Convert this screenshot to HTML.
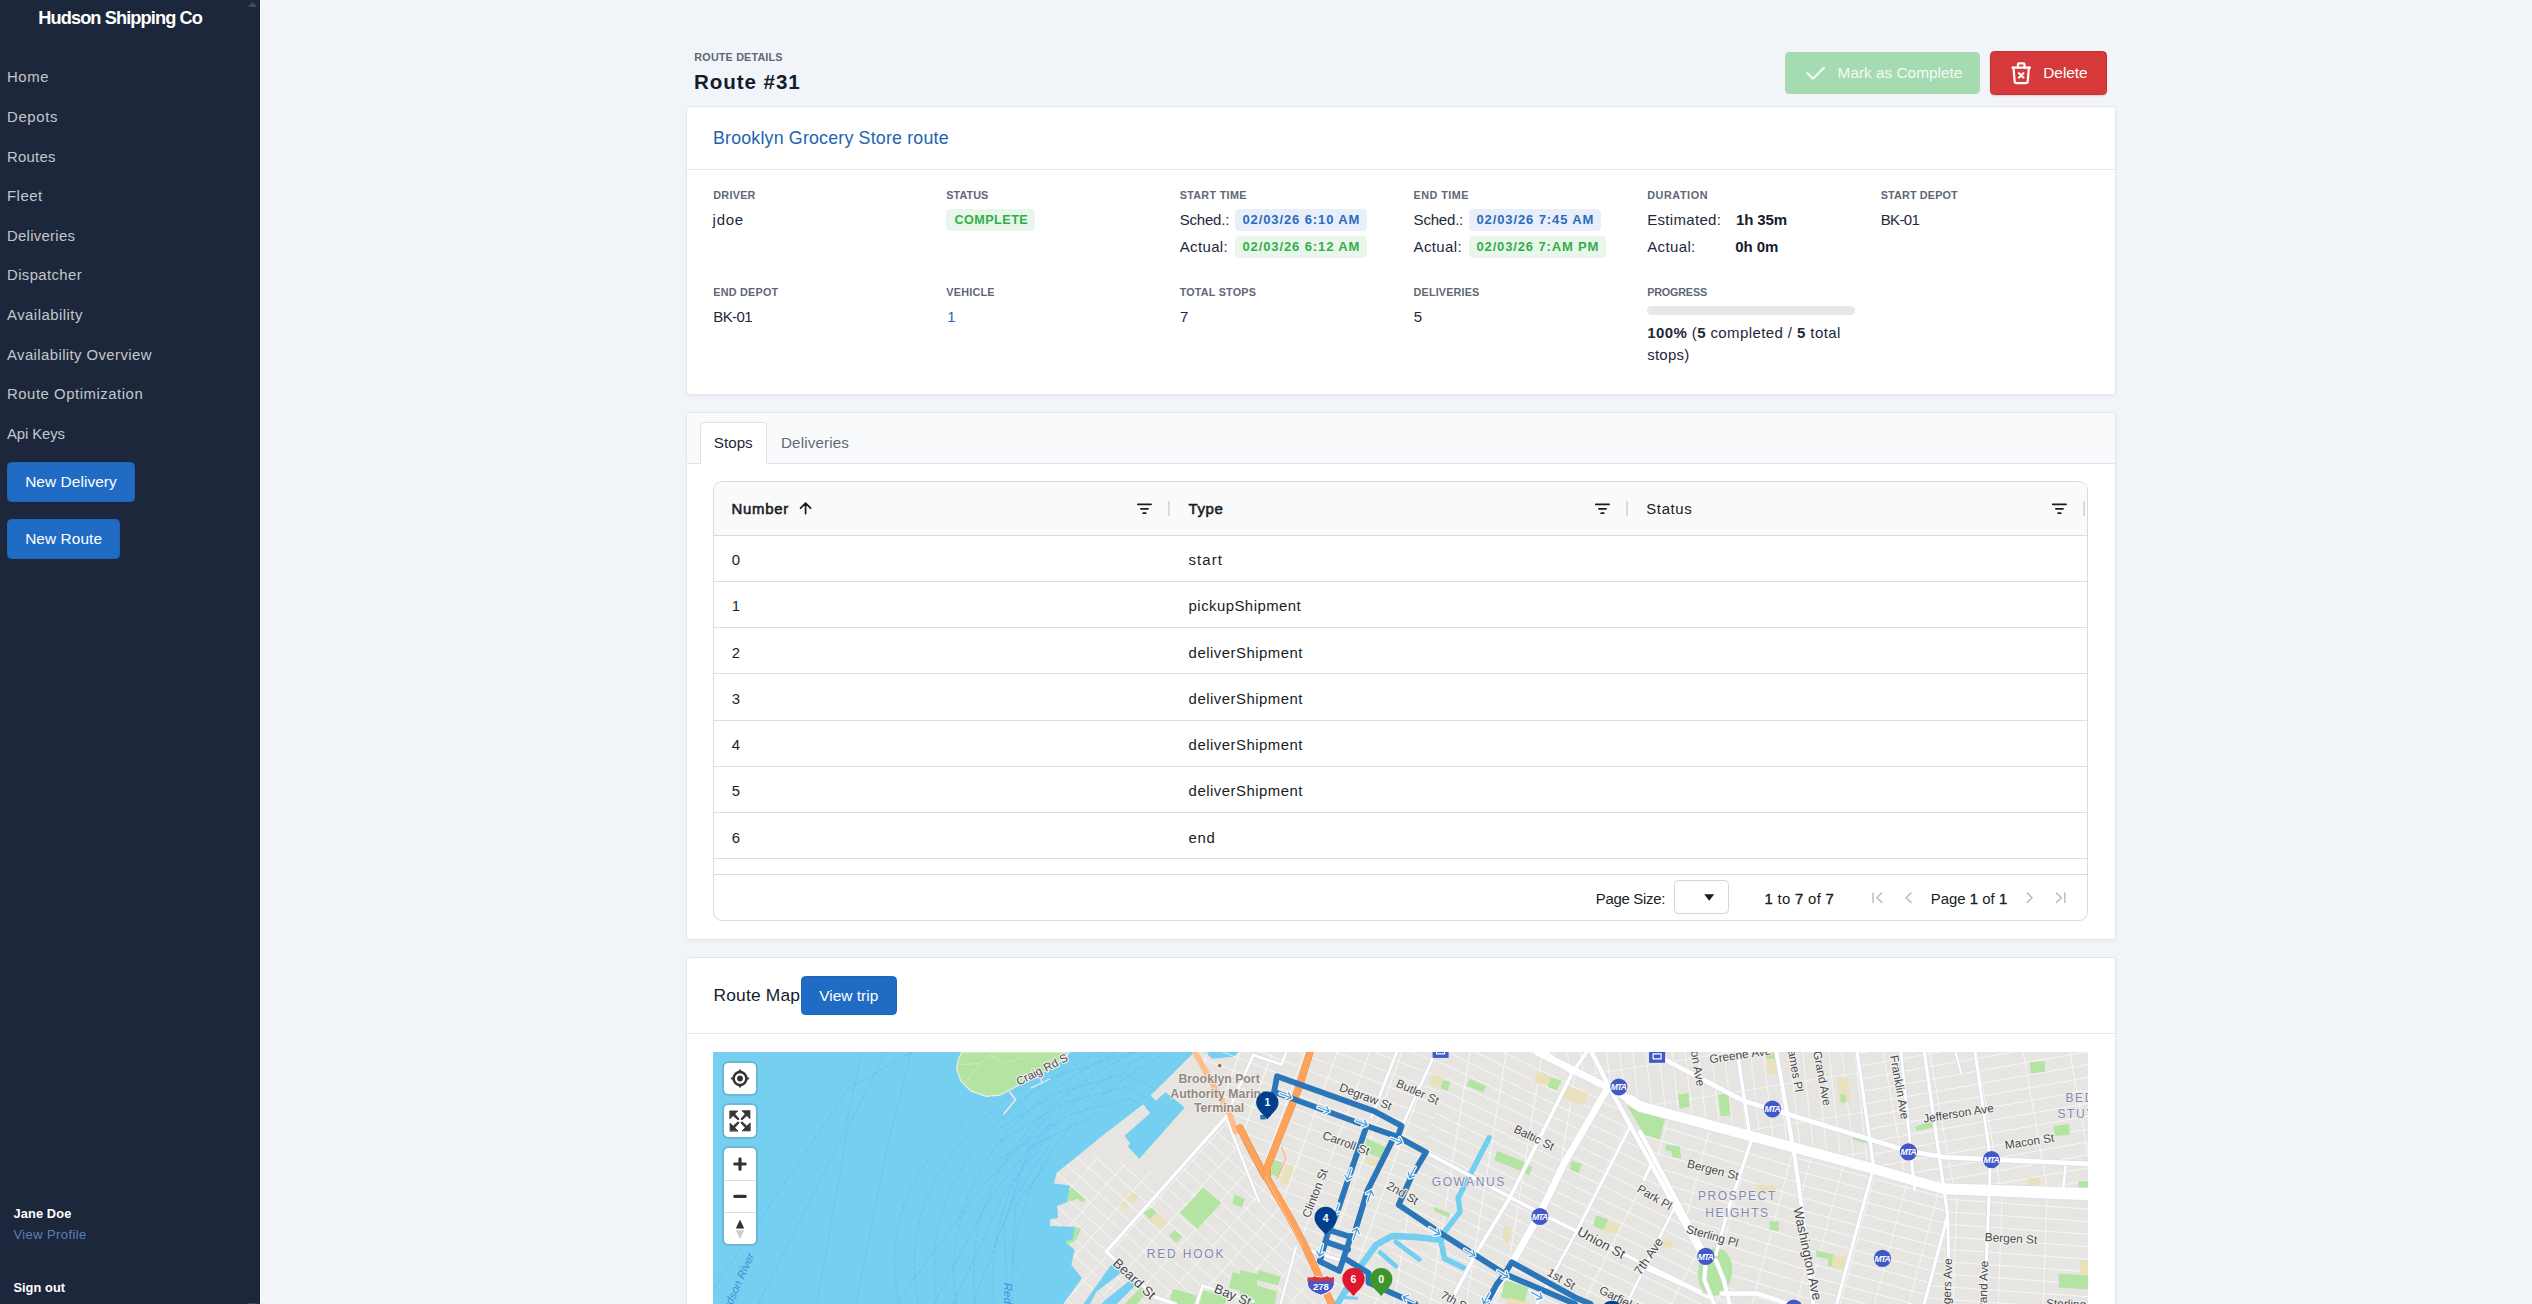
<!DOCTYPE html>
<html lang="en"><head><meta charset="utf-8"><title>Route #31 - Hudson Shipping Co</title>
<style>
*{box-sizing:border-box}
html,body{margin:0;padding:0}
body{width:2532px;height:1304px;overflow:hidden;position:relative;background:#f1f5f9;font-family:"Liberation Sans",sans-serif;color:#1e293b}
.a{position:absolute}
.t{position:absolute;white-space:pre;line-height:1;font-family:"Liberation Sans",sans-serif;color:#1e293b}
.t b{font-weight:700}.t i{font-style:normal;-webkit-text-stroke:0.38px currentColor}
#side{left:0;top:0;width:260px;height:1304px;background:#1d273b}
.btn{position:absolute;border-radius:4.4px;background:#206bc4;border:1px solid #1f64b6;box-shadow:0 1px 0 rgba(30,41,59,.05)}
.card{position:absolute;background:#fff;border:1px solid #e3e6ea;border-radius:3.5px;box-shadow:0 2px 4px rgba(30,41,59,.04)}
.hl{position:absolute;height:1.1px;background:#e3e6ea}
.bdg{position:absolute;height:22px;border-radius:4.4px}
.rl{position:absolute;left:714px;width:1373px;height:1.1px;background:#dddfe0}
.sep{position:absolute;width:1.6px;top:501px;height:15px;background:#d9dadb}
.ctrl{position:absolute;left:724px;width:32px;background:#fff;border-radius:4.4px;box-shadow:0 0 0 2px rgba(0,0,0,.1)}
</style></head><body>
<!-- sidebar -->
<div id="side" class="a"></div>
<div class="a" style="left:259px;top:0;width:1px;height:1304px;background:#182136"></div><div class="a" style="left:260px;top:0;width:1px;height:1304px;background:#fdfefe"></div><div class="a" style="left:248px;top:1303px;width:9px;height:1px;background:#3a465b"></div>
<svg class="a" style="left:247px;top:1px" width="11" height="7"><path d="M0.8 6L5.5 0.9L10.2 6Z" fill="#414c60"/></svg>
<div class="btn" style="left:7px;top:462px;width:128px;height:40px"></div>
<div class="btn" style="left:7px;top:519px;width:113px;height:40px"></div>

<!-- page header buttons -->
<div class="a" style="left:1785px;top:52px;width:195px;height:42px;border-radius:4.4px;background:#a4dbb1"></div>
<svg class="a" style="left:1802px;top:60.2px" width="26.4" height="26.4" viewBox="0 0 24 24" fill="none" stroke="#f3faf5" stroke-width="2" stroke-linecap="round" stroke-linejoin="round"><path d="M5 12l5 5l10 -10"/></svg>
<div class="a" style="left:1990px;top:51px;width:117px;height:44px;border-radius:4.4px;background:#d63939;border:1px solid #bf3338;box-shadow:0 1px 2px rgba(214,57,57,.25)"></div>
<svg class="a" style="left:2007.95px;top:59.95px" width="26.4" height="26.4" viewBox="0 0 24 24" fill="none" stroke="#fff" stroke-width="2" stroke-linecap="round" stroke-linejoin="round"><path d="M4 7h16"/><path d="M5 7l1 12a2 2 0 0 0 2 2h8a2 2 0 0 0 2 -2l1 -12"/><path d="M9 7v-3a1 1 0 0 1 1 -1h4a1 1 0 0 1 1 1v3"/><path d="M10 12l4 4m0 -4l-4 4"/></svg>

<!-- card 1 -->
<div class="card" style="left:686px;top:106px;width:1430px;height:289px"></div>
<div class="hl" style="left:687px;top:169px;width:1428px"></div>
<div class="bdg" style="left:946px;top:209px;width:89px;background:#e9f6eb"></div>
<div class="bdg" style="left:1235px;top:209px;width:132px;background:#e8eff9"></div>
<div class="bdg" style="left:1235px;top:236px;width:132px;background:#e9f6eb"></div>
<div class="bdg" style="left:1469px;top:209px;width:132px;background:#e8eff9"></div>
<div class="bdg" style="left:1469px;top:236px;width:136.6px;background:#e9f6eb"></div>
<div class="a" style="left:1647px;top:306px;width:208px;height:9px;border-radius:4.5px;background:#e6e7e9"></div>

<!-- card 2 (tabs + grid) -->
<div class="card" style="left:686px;top:412px;width:1430px;height:528px"></div>
<div class="a" style="left:687px;top:413px;width:1428px;height:50.5px;background:#f8fafc;border-bottom:1.1px solid #dfe3e8;border-radius:3.4px 3.4px 0 0"></div>
<div class="a" style="left:700px;top:422px;width:67px;height:41.5px;background:#fff;border:1px solid #dfe3e8;border-bottom:none;border-radius:4.4px 4.4px 0 0"></div><div class="a" style="left:701px;top:462px;width:65px;height:2.6px;background:#fff"></div>
<div class="a" style="left:713px;top:481px;width:1375px;height:440px;border:1.1px solid #d9dadb;border-radius:8.8px;background:#fff;overflow:hidden"><div class="a" style="left:0;top:0;width:1375px;height:53px;background:#fafafb"></div></div>
<div class="rl" style="top:534.8px;background:#d9dbdc"></div>
<div class="rl" style="top:580.7px"></div><div class="rl" style="top:627px"></div><div class="rl" style="top:673.3px"></div><div class="rl" style="top:719.6px"></div><div class="rl" style="top:765.9px"></div><div class="rl" style="top:812.2px"></div><div class="rl" style="top:858.1px"></div>
<div class="rl" style="top:874.2px;background:#d9dbdc"></div>
<div class="sep" style="left:1168.3px"></div><div class="sep" style="left:1626.2px"></div>
<div class="a" style="left:2082.6px;top:501px;width:2.8px;height:15px;background:#d9dadb"></div>
<!-- sort arrow + filter icons -->
<svg class="a" style="left:798px;top:500px" width="16" height="16" fill="none" stroke="#181d1f" stroke-width="1.7" stroke-linecap="round" stroke-linejoin="round"><path d="M7.6 13.6V3.2M2.6 8.2L7.6 3.2L12.6 8.2"/></svg>
<svg class="a" style="left:1136px;top:502px" width="18" height="14" stroke="#181d1f" stroke-width="1.75" stroke-linecap="round"><path d="M1.8 2.3H15.1M4.9 6.8H12M7.2 11.2H9.7"/></svg>
<svg class="a" style="left:1594.2px;top:502px" width="18" height="14" stroke="#181d1f" stroke-width="1.75" stroke-linecap="round"><path d="M1.8 2.3H15.1M4.9 6.8H12M7.2 11.2H9.7"/></svg>
<svg class="a" style="left:2050.9px;top:502px" width="18" height="14" stroke="#181d1f" stroke-width="1.75" stroke-linecap="round"><path d="M1.8 2.3H15.1M4.9 6.8H12M7.2 11.2H9.7"/></svg>
<!-- paging -->
<div class="a" style="left:1674.4px;top:880.3px;width:54.3px;height:34.1px;border:1.1px solid #d3d5d7;border-radius:4.4px;background:#fff"></div>
<svg class="a" style="left:1703px;top:893px" width="13" height="9"><path d="M1.2 1.3H11.2L6.2 7.8Z" fill="#181d1f"/></svg>
<svg class="a" style="left:1868px;top:888px" width="200" height="20" fill="none" stroke="#b9bbbd" stroke-width="1.45" stroke-linecap="round" stroke-linejoin="round"><path d="M5 5V14.4M13.8 5L8.8 9.7L13.8 14.4"/><path d="M43 5L38 9.7L43 14.4"/><path d="M159.2 5L164.2 9.7L159.2 14.4"/><path d="M188.4 5L193.4 9.7L188.4 14.4M196.8 5V14.4"/></svg>

<!-- card 3 (map) -->
<div class="card" style="left:686px;top:957px;width:1430px;height:380px"></div>
<div class="hl" style="left:687px;top:1033px;width:1428px"></div>
<div class="btn" style="left:801px;top:976px;width:96px;height:38.6px"></div>
<svg style="position:absolute;left:713px;top:1052px" width="1375" height="252" viewBox="713 1052 1375 252">
<defs>
<pattern id="gRH" width="24" height="12.5" patternUnits="userSpaceOnUse" patternTransform="matrix(0.743 0.669 -0.669 0.743 1184.3 1169)"><path d="M0 0H24" stroke="#fff" stroke-width="1.2" fill="none" opacity="0.9"/><path d="M0 0V12.5" stroke="#fff" stroke-width="1.2" fill="none" opacity="0.9"/></pattern>
<pattern id="gCG" width="30.4" height="13.5" patternUnits="userSpaceOnUse" patternTransform="matrix(0.934 0.357 -0.342 0.940 1313.7 1115.3)"><path d="M0 0H30.4" stroke="#fff" stroke-width="1.3" fill="none" opacity="0.9"/><path d="M0 0V13.5" stroke="#fff" stroke-width="1.5" fill="none" opacity="0.9"/></pattern>
<pattern id="gGW" width="37.4" height="12.6" patternUnits="userSpaceOnUse" patternTransform="matrix(0.899 0.438 -0.156 0.988 1466 1073.9)"><path d="M0 0H37.4" stroke="#fff" stroke-width="1.3" fill="none" opacity="0.9"/><path d="M0 0V12.6" stroke="#fff" stroke-width="1.5" fill="none" opacity="0.9"/></pattern>
<pattern id="gPS" width="39.6" height="12.6" patternUnits="userSpaceOnUse" patternTransform="matrix(0.899 0.438 -0.448 0.894 1628.3 1212)"><path d="M0 0H39.6" stroke="#fff" stroke-width="1.3" fill="none" opacity="0.9"/><path d="M0 0V12.6" stroke="#fff" stroke-width="1.4" fill="none" opacity="0.9"/></pattern>
<pattern id="gPH" width="43" height="13.5" patternUnits="userSpaceOnUse" patternTransform="matrix(0.956 0.292 -0.259 0.966 1751 1139.4)"><path d="M0 0H43" stroke="#fff" stroke-width="1.3" fill="none" opacity="0.9"/><path d="M0 0V13.5" stroke="#fff" stroke-width="1.4" fill="none" opacity="0.9"/></pattern>
<pattern id="gCHW" width="33" height="12.3" patternUnits="userSpaceOnUse" patternTransform="matrix(0.966 0.259 -0.259 0.966 1860.7 1225.7)"><path d="M0 0H33" stroke="#fff" stroke-width="1.3" fill="none" opacity="0.9"/><path d="M0 0V12.3" stroke="#fff" stroke-width="1.3" fill="none" opacity="0.9"/></pattern>
<pattern id="gCHE" width="45" height="12.5" patternUnits="userSpaceOnUse" patternTransform="matrix(0.998 0.07 -0.035 0.999 2000 1240)"><path d="M0 0H45" stroke="#fff" stroke-width="1.3" fill="none" opacity="0.9"/><path d="M0 0V12.5" stroke="#fff" stroke-width="1.3" fill="none" opacity="0.9"/></pattern>
<pattern id="gFG" width="13" height="40" patternUnits="userSpaceOnUse" patternTransform="matrix(0.988 -0.156 0.110 0.994 1634 1067)"><path d="M0 0H13" stroke="#fff" stroke-width="1.2" fill="none" opacity="0.9"/><path d="M0 0V40" stroke="#fff" stroke-width="1.3" fill="none" opacity="0.9"/></pattern>
<pattern id="gBS" width="46" height="12.7" patternUnits="userSpaceOnUse" patternTransform="matrix(0.985 -0.174 0.174 0.985 1983.6 1095.4)"><path d="M0 0H46" stroke="#fff" stroke-width="1.3" fill="none" opacity="0.9"/><path d="M0 0V12.7" stroke="#fff" stroke-width="1.4" fill="none" opacity="0.9"/></pattern>
</defs>
<rect x="713" y="1052" width="1375" height="252" fill="#75cff0"/>
<path d="M713.1 1289.6 L848.0 1089.0 L912.3 1051.9" fill="none" stroke="#5db8e8" stroke-width="0.7" stroke-linejoin="round" stroke-linecap="round" stroke-dasharray="5 2.5" opacity=".8"/>
<path d="M758.4 1304.0 L844.1 1133.8 L861.7 1051.9" fill="none" stroke="#5db8e8" stroke-width="0.7" stroke-linejoin="round" stroke-linecap="round" stroke-dasharray="5 2.5" opacity=".8"/>
<path d="M816.9 1304.0 L848.0 1127.9 L885.0 1051.9" fill="none" stroke="#5db8e8" stroke-width="0.7" stroke-linejoin="round" stroke-linecap="round" stroke-dasharray="5 2.5" opacity=".8"/>
<path d="M855.8 1304.0 L887.0 1147.4 L911.3 1051.9" fill="none" stroke="#5db8e8" stroke-width="0.7" stroke-linejoin="round" stroke-linecap="round" stroke-dasharray="5 2.5" opacity=".8"/>
<path d="M894.8 1304.0 L982.4 1186.3 L1050.0 1114.3" fill="none" stroke="#5db8e8" stroke-width="0.7" stroke-linejoin="round" stroke-linecap="round" stroke-dasharray="5 2.5" opacity=".8"/>
<path d="M933.7 1304.0 L992.2 1194.1 L1050.0 1124.0" fill="none" stroke="#5db8e8" stroke-width="0.7" stroke-linejoin="round" stroke-linecap="round" stroke-dasharray="5 2.5" opacity=".8"/>
<path d="M953.2 1304.0 L1003.9 1194.1 L1050.0 1133.8" fill="none" stroke="#5db8e8" stroke-width="0.7" stroke-linejoin="round" stroke-linecap="round" stroke-dasharray="5 2.5" opacity=".8"/>
<path d="M972.7 1304.0 L1011.6 1201.9 L1050.0 1143.5" fill="none" stroke="#5db8e8" stroke-width="0.7" stroke-linejoin="round" stroke-linecap="round" stroke-dasharray="5 2.5" opacity=".8"/>
<path d="M1050.0 1304.0 L1011.6 1264.3 L1015.5 1205.8 L1050.0 1159.1" fill="none" stroke="#5db8e8" stroke-width="0.7" stroke-linejoin="round" stroke-linecap="round" stroke-dasharray="5 2.5" opacity=".8"/>
<path d="M1000.0 1114.3 L1048.7 1079.2 L1101.3 1061.7 L1136.3 1051.9" fill="none" stroke="#5db8e8" stroke-width="0.7" stroke-linejoin="round" stroke-linecap="round" stroke-dasharray="5 2.5" opacity=".8"/>
<path d="M1000.0 1127.9 L1058.4 1092.9 L1124.7 1073.4 L1155.8 1089.0" fill="none" stroke="#5db8e8" stroke-width="0.7" stroke-linejoin="round" stroke-linecap="round" stroke-dasharray="5 2.5" opacity=".8"/>
<path d="M1000.0 1141.5 L1064.3 1102.6 L1124.7 1087.0 L1151.9 1100.6" fill="none" stroke="#5db8e8" stroke-width="0.7" stroke-linejoin="round" stroke-linecap="round" stroke-dasharray="5 2.5" opacity=".8"/>
<path d="M1000.0 1159.1 L1070.1 1114.3 L1128.6 1098.7 L1155.8 1112.3" fill="none" stroke="#5db8e8" stroke-width="0.7" stroke-linejoin="round" stroke-linecap="round" stroke-dasharray="5 2.5" opacity=".8"/>
<path d="M1007.8 1304.0 L1003.9 1225.3 L1029.2 1147.4 L1097.4 1114.3" fill="none" stroke="#5db8e8" stroke-width="0.7" stroke-linejoin="round" stroke-linecap="round" stroke-dasharray="5 2.5" opacity=".8"/>
<path d="M1168.8 1052.2 Q1002.9 1137.3 1012.9 1305.3" fill="none" stroke="#5db8e8" stroke-width="0.75" stroke-dasharray="5 2.5" opacity=".75"/>
<path d="M1151.1 1052.2 Q979.7 1140.6 994.1 1305.3" fill="none" stroke="#5db8e8" stroke-width="0.75" stroke-dasharray="5 2.5" opacity=".75"/>
<path d="M1133.4 1052.2 Q956.5 1143.9 975.3 1305.3" fill="none" stroke="#5db8e8" stroke-width="0.75" stroke-dasharray="5 2.5" opacity=".75"/>
<path d="M1115.7 1052.2 Q933.3 1147.2 956.5 1305.3" fill="none" stroke="#5db8e8" stroke-width="0.75" stroke-dasharray="5 2.5" opacity=".75"/>
<path d="M1098.0 1052.2 Q910.1 1150.6 937.7 1305.3" fill="none" stroke="#5db8e8" stroke-width="0.75" stroke-dasharray="5 2.5" opacity=".75"/>
<path d="M1080.3 1052.2 Q886.8 1153.9 918.9 1305.3" fill="none" stroke="#5db8e8" stroke-width="0.75" stroke-dasharray="5 2.5" opacity=".75"/>
<path d="M1062.6 1052.2 Q863.6 1157.2 900.1 1305.3" fill="none" stroke="#5db8e8" stroke-width="0.75" stroke-dasharray="5 2.5" opacity=".75"/>
<path d="M962.0 1051.9 L958.1 1059.7 L956.7 1069.5 L961.0 1081.2 L970.7 1090.9 L986.3 1096.4 L1000.0 1095.2 L1011.6 1089.0 L1050.0 1068.5 L1067.2 1055.8 L1069.1 1051.9 Z" fill="#b4e4a1" stroke="#e8efe6" stroke-width="1.2"/>
<path d="M961.0 1064.6 L980.5 1063.6 L990.2 1054.9 L1003.9 1063.6 L1021.4 1057.8" fill="none" stroke="#d9f0cf" stroke-width="0.6" stroke-linejoin="round" stroke-linecap="round" />
<path d="M964.9 1083.1 L980.5 1063.6" fill="none" stroke="#d9f0cf" stroke-width="0.6" stroke-linejoin="round" stroke-linecap="round" />
<path d="M1009.7 1091.9 L1015.5 1099.7 L1003.9 1113.9" fill="none" stroke="#dfe6ea" stroke-width="1.8" stroke-linejoin="round" stroke-linecap="round" stroke-linecap="butt"/>
<path d="M1031.1 1088.0 L1050.0 1079.2" fill="none" stroke="#dfe6ea" stroke-width="1.4" stroke-linejoin="round" stroke-linecap="round" />
<path d="M1040.9 1079.2 L1042.2 1083.5" fill="none" stroke="#dfe6ea" stroke-width="1.4" stroke-linejoin="round" stroke-linecap="round" />
<path id="landp" d="M1194.8 1051.9 L1151.0 1095.2 L1155.8 1100.6 L1165.6 1092.1 L1185.0 1107.5 L1139.3 1159.1 L1127.6 1146.4 L1130.1 1143.5 L1124.3 1135.7 L1150.0 1113.3 L1143.2 1104.5 L1109.1 1130.8 L1109.4 1130.0 L1076.7 1156.7 L1056.7 1172.7 L1054.0 1183.4 L1064.7 1184.7 L1070.0 1186.0 L1067.3 1202.0 L1057.3 1206.1 L1058.0 1218.1 L1050.0 1219.4 L1050.0 1226.1 L1072.7 1226.7 L1080.7 1228.7 L1075.4 1240.7 L1067.3 1243.4 L1074.7 1250.1 L1071.3 1264.8 L1082.0 1278.1 L1063.3 1304.0 L2088.0 1304.0 L2088.0 1052.0 Z" fill="#e6e5e1"/>
<path d="M1204.5 1051.9 L1238.6 1051.9 L1233.7 1056.8 L1212.3 1058.8 Z" fill="#75cff0" />
<path d="M1282.4 1051.9 L1303.9 1051.9 L1300.0 1054.9 L1284.4 1055.5 Z" fill="#e6e5e1" />
<path d="M1070.0 1186.0 L1086.0 1199.4 L1082.7 1202.7 L1077.4 1198.7 L1067.3 1202.7 Z" fill="#b4e4a1" />
<path d="M1074.7 1227.4 L1081.0 1228.7 L1075.4 1240.7 L1066.7 1244.7 L1066.0 1241.4 L1072.7 1238.7 Z" fill="#b4e4a1" />
<clipPath id="cl"><path d="M1194.8 1051.9 L1151.0 1095.2 L1155.8 1100.6 L1165.6 1092.1 L1185.0 1107.5 L1139.3 1159.1 L1127.6 1146.4 L1130.1 1143.5 L1124.3 1135.7 L1150.0 1113.3 L1143.2 1104.5 L1109.1 1130.8 L1109.4 1130.0 L1076.7 1156.7 L1056.7 1172.7 L1054.0 1183.4 L1064.7 1184.7 L1070.0 1186.0 L1067.3 1202.0 L1057.3 1206.1 L1058.0 1218.1 L1050.0 1219.4 L1050.0 1226.1 L1072.7 1226.7 L1080.7 1228.7 L1075.4 1240.7 L1067.3 1243.4 L1074.7 1250.1 L1071.3 1264.8 L1082.0 1278.1 L1063.3 1304.0 L2088.0 1304.0 L2088.0 1052.0 Z"/></clipPath>
<g clip-path="url(#cl)">
<path d="M1194.8 1051.9 L1229.8 1114.3 L1265.3 1176.6 L1288.7 1215.5 L1304.3 1244.7 L1317.9 1274.0 L1331.5 1303.9 L713.0 1304.0 L713.0 1052.0 Z" fill="url(#gRH)"/>
<path d="M1310.1 1051.9 L1298.4 1088.9 L1278.9 1137.6 L1267.3 1166.8 L1267.3 1178.5 L1288.7 1215.5 L1304.3 1244.7 L1317.9 1274.0 L1331.5 1303.9 L1376.3 1303.9 L1454.2 1051.9 Z" fill="url(#gCG)"/>
<path d="M1194.8 1051.9 L1229.8 1114.3 L1265.3 1176.6 L1267.3 1166.8 L1278.9 1137.6 L1298.4 1088.9 L1310.1 1051.9 Z" fill="url(#gCG)"/>
<path d="M1454.2 1051.9 L1376.3 1303.9 L1486.3 1304.0 L1513.6 1260.4 L1540.9 1211.7 L1564.3 1163.0 L1607.1 1089.0 L1537.0 1051.9 Z" fill="url(#gGW)"/>
<path d="M1607.1 1089.0 L1564.3 1163.0 L1540.9 1211.7 L1513.6 1260.4 L1486.3 1304.0 L1731.5 1303.9 L1706.2 1256.4 L1700.0 1252.6 L1609.1 1087.0 Z" fill="url(#gPS)"/>
<path d="M1640.0 1106.5 L1793.8 1147.4 L1801.6 1205.8 L1813.3 1303.9 L1731.5 1303.9 L1706.2 1256.4 L1640.0 1131.8 Z" fill="url(#gPH)"/>
<path d="M1793.8 1147.4 L1873.7 1168.8 L1943.8 1189.2 L1947.7 1215.5 L1924.3 1303.9 L1813.3 1303.9 L1801.6 1205.8 Z" fill="url(#gCHW)"/>
<path d="M1943.8 1189.2 L2087.9 1195.1 L2087.9 1303.9 L1924.3 1303.9 L1947.7 1215.5 Z" fill="url(#gCHE)"/>
<path d="M1537.0 1051.9 L1607.1 1087.0 L1640.0 1106.5 L1873.7 1166.8 L1857.1 1051.9 Z" fill="url(#gFG)"/>
<path d="M1857.1 1051.9 L1873.7 1166.8 L1943.8 1189.2 L2087.9 1195.1 L2087.9 1051.9 Z" fill="url(#gBS)"/>
</g>
<path d="M1194.8 1051.9 L1151.0 1095.2 L1155.8 1100.6 L1165.6 1092.1 L1185.0 1107.5 L1139.3 1159.1 L1127.6 1146.4 L1130.1 1143.5 L1124.3 1135.7 L1150.0 1113.3 L1143.2 1104.5 L1109.1 1130.8 L1077.9 1156.2 L1093.5 1155.2 L1120.8 1163.0 L1150.0 1171.7 L1165.6 1190.2 L1225.9 1117.2 L1206.5 1081.2 Z" fill="#e6e5e1" />
<path d="M1110.7 1265.4 L1116.7 1263.2 L1122.7 1271.4 L1096.7 1291.4 L1090.0 1304.0 L1083.4 1304.0 Z" fill="#75cff0" />
<path d="M1096.7 1291.4 L1106.0 1299.4 L1133.4 1277.4 L1138.1 1282.8 L1116.7 1304.0 L1090.0 1304.0 Z" fill="#75cff0" />
<path d="M1096.7 1291.4 L1106.0 1299.4 L1101.4 1304.0 L1090.0 1304.0 Z" fill="#e6e5e1" />
<path d="M1124.7 1304.0 L1142.1 1286.1 L1148.1 1292.1 L1136.7 1304.0 Z" fill="#b4e4a1" />
<path d="M1203.4 1187.4 L1221.4 1202.7 L1197.4 1228.7 L1180.1 1212.7 Z" fill="#b4e4a1" />
<path d="M1234.1 1194.7 L1244.8 1198.7 L1242.1 1207.4 L1232.8 1204.0 Z" fill="#b4e4a1" />
<path d="M1143.4 1212.7 L1151.4 1207.4 L1156.7 1212.7 L1149.4 1219.4 Z" fill="#b4e4a1" />
<path d="M1149.4 1219.4 L1156.7 1212.7 L1168.1 1222.1 L1160.7 1230.1 Z" fill="#e9e1bb" />
<path d="M1168.7 1235.4 L1174.7 1230.1 L1182.1 1236.7 L1176.1 1242.7 Z" fill="#b4e4a1" />
<path d="M1126.1 1198.7 L1132.7 1191.4 L1138.7 1196.7 L1132.1 1204.0 Z" fill="#e9e1bb" />
<path d="M1119.4 1205.4 L1124.0 1200.7 L1128.7 1205.4 L1124.0 1210.1 Z" fill="#e9e1bb" />
<path d="M1172.7 1288.8 L1196.8 1295.4 L1194.1 1304.0 L1168.7 1304.0 Z" fill="#b4e4a1" />
<path d="M1203.4 1290.1 L1227.5 1297.4 L1224.8 1304.0 L1199.4 1304.0 Z" fill="#b4e4a1" />
<path d="M1232.8 1272.1 L1250.0 1276.8 L1250.0 1294.1 L1228.8 1287.4 Z" fill="#b4e4a1" />
<path d="M1272.7 1160.1 L1282.4 1162.0 L1278.5 1176.6 L1270.7 1174.7 Z" fill="#b4e4a1" />
<path d="M1286.3 1163.9 L1294.1 1165.9 L1288.3 1184.4 L1279.5 1182.5 Z" fill="#e9e1bb" />
<path d="M1366.6 1138.6 L1386.1 1147.4 L1382.2 1159.1 L1364.6 1151.3 Z" fill="#b4e4a1" />
<path d="M1366.6 1156.1 L1380.2 1161.0 L1376.3 1166.8 L1364.6 1163.0 Z" fill="#e9e1bb" />
<path d="M1431.8 1074.3 L1442.5 1077.3 L1439.6 1088.0 L1429.9 1085.1 Z" fill="#e9e1bb" />
<path d="M1442.5 1081.2 L1450.3 1083.1 L1447.4 1090.9 L1440.6 1088.6 Z" fill="#b4e4a1" />
<path d="M1469.8 1079.2 L1486.3 1086.0 L1483.4 1091.9 L1467.8 1086.0 Z" fill="#b4e4a1" />
<path d="M1538.0 1071.4 L1551.6 1076.3 L1547.7 1085.1 L1536.0 1081.2 Z" fill="#e9e1bb" />
<path d="M1551.6 1077.3 L1561.3 1080.2 L1556.5 1089.9 L1547.7 1086.0 Z" fill="#b4e4a1" />
<path d="M1567.2 1086.0 L1588.6 1093.8 L1584.7 1104.5 L1564.2 1096.7 Z" fill="#e9e1bb" />
<path d="M1498.0 1151.3 L1524.3 1162.0 L1520.4 1170.7 L1495.1 1160.0 Z" fill="#b4e4a1" />
<path d="M1526.3 1164.9 L1532.1 1166.8 L1528.2 1174.6 L1523.3 1172.7 Z" fill="#b4e4a1" />
<path d="M1434.7 1206.8 L1450.3 1213.6 L1448.4 1217.5 L1433.8 1210.7 Z" fill="#b4e4a1" />
<path d="M1571.1 1161.0 L1580.8 1163.9 L1577.9 1172.7 L1570.1 1169.8 Z" fill="#b4e4a1" />
<path d="M1596.4 1215.5 L1608.1 1219.4 L1604.2 1229.2 L1593.5 1225.3 Z" fill="#b4e4a1" />
<path d="M1608.1 1220.4 L1619.7 1224.3 L1615.9 1233.1 L1605.1 1230.1 Z" fill="#e9e1bb" />
<path d="M1504.8 1226.2 L1511.7 1228.2 L1508.7 1243.8 L1502.9 1241.8 Z" fill="#e9e1bb" />
<path d="M1504.8 1279.8 L1528.2 1287.6 L1524.3 1303.9 L1501.0 1297.3 Z" fill="#b4e4a1" />
<path d="M1508.7 1297.3 L1532.1 1303.9 L1506.8 1303.9 Z" fill="#e9e1bb" />
<path d="M1240.0 1270.1 L1257.5 1274.0 L1255.6 1303.9 L1240.0 1303.9 Z" fill="#b4e4a1" />
<path d="M1258.5 1270.1 L1280.9 1276.9 L1278.0 1285.6 L1256.6 1279.8 Z" fill="#b4e4a1" />
<path d="M1251.7 1283.7 L1277.0 1291.5 L1275.1 1303.9 L1249.7 1303.9 Z" fill="#b4e4a1" />
<path d="M1640.0 1110.4 L1665.3 1117.2 L1659.5 1138.6 L1640.0 1131.8 Z" fill="#b4e4a1" />
<path d="M1678.0 1094.4 L1688.7 1093.2 L1689.1 1105.5 L1679.9 1108.4 Z" fill="#b4e4a1" />
<path d="M1717.9 1094.4 L1728.6 1093.8 L1730.6 1115.2 L1720.8 1116.2 Z" fill="#b4e4a1" />
<path d="M1666.3 1144.4 L1679.9 1146.4 L1680.9 1158.1 L1674.1 1157.1 L1673.1 1151.3 L1666.3 1150.3 Z" fill="#b4e4a1" />
<path d="M1766.6 1058.8 L1776.3 1058.8 L1777.3 1074.3 L1767.6 1074.3 Z" fill="#e9e1bb" />
<path d="M1765.6 1051.9 L1775.3 1051.9 L1775.7 1058.8 L1766.2 1058.8 Z" fill="#b4e4a1" />
<path d="M1836.7 1078.2 L1848.0 1077.7 L1849.9 1101.6 L1839.6 1102.6 Z" fill="#e9e1bb" />
<path d="M1840.2 1094.8 L1845.5 1094.8 L1846.0 1102.2 L1840.6 1102.6 Z" fill="#b4e4a1" />
<path d="M1853.2 1134.7 L1868.8 1138.6 L1866.9 1143.5 L1852.3 1139.6 Z" fill="#b4e4a1" />
<path d="M1914.6 1126.9 L1932.1 1121.1 L1933.1 1126.9 L1916.5 1130.8 Z" fill="#b4e4a1" />
<path d="M1769.5 1221.4 L1779.2 1221.4 L1778.3 1231.1 L1769.5 1230.1 Z" fill="#b4e4a1" />
<path d="M1816.2 1250.6 L1833.8 1254.5 L1831.8 1266.2 L1827.9 1266.2 L1828.5 1259.3 L1816.2 1256.4 Z" fill="#b4e4a1" />
<path d="M1832.8 1255.5 L1846.4 1257.4 L1844.5 1270.1 L1831.8 1267.1 Z" fill="#e9e1bb" />
<path d="M1756.8 1184.4 L1776.3 1186.3 L1775.3 1195.1 L1756.8 1193.1 Z" fill="#e9e1bb" />
<path d="M1662.4 1238.9 L1673.1 1241.8 L1671.2 1248.6 L1661.4 1245.7 Z" fill="#e9e1bb" />
<path d="M2030.1 1062.1 L2044.5 1061.3 L2045.1 1071.8 L2030.9 1073.4 Z" fill="#b4e4a1" />
<path d="M2053.8 1125.9 L2069.0 1124.0 L2069.8 1134.7 L2054.8 1136.1 Z" fill="#b4e4a1" />
<path d="M2078.2 1181.5 L2087.9 1180.9 L2087.9 1195.1 L2078.2 1195.1 Z" fill="#b4e4a1" />
<path d="M2028.5 1178.1 L2039.8 1177.6 L2039.2 1189.2 L2034.4 1189.8 L2034.0 1191.2 L2028.5 1191.2 Z" fill="#e9e1bb" />
<path d="M2058.7 1274.0 L2087.9 1274.9 L2087.9 1289.5 L2058.7 1287.6 Z" fill="#b4e4a1" />
<path d="M2080.1 1260.3 L2087.9 1260.3 L2087.9 1274.9 L2080.1 1274.9 Z" fill="#e9e1bb" />
<path d="M1915.6 1126.9 L1931.2 1121.1 L1933.1 1126.9 L1917.5 1130.8 Z" fill="#b4e4a1" />
<path d="M1626.6 1104.5 L1665.5 1116.2 L1659.7 1139.6 L1644.1 1134.7 Z" fill="#b4e4a1" />
<path d="M1665.5 1145.4 L1679.2 1147.4 L1681.1 1158.1 L1672.4 1157.1 L1671.4 1151.3 L1665.5 1150.3 Z" fill="#b4e4a1" />
<path d="M1678.2 1094.8 L1687.9 1093.2 L1689.9 1106.5 L1680.2 1108.4 Z" fill="#b4e4a1" />
<path d="M1595.4 1216.5 L1607.1 1220.4 L1603.2 1230.2 L1594.4 1226.3 Z" fill="#b4e4a1" />
<path d="M1607.1 1221.4 L1619.8 1225.3 L1615.9 1234.1 L1604.2 1230.8 Z" fill="#e9e1bb" />
<path d="M1503.9 1226.3 L1511.7 1228.2 L1508.7 1242.8 L1502.9 1240.9 Z" fill="#e9e1bb" />
<path d="M1497.1 1151.3 L1524.3 1162.0 L1521.4 1170.8 L1494.1 1160.1 Z" fill="#b4e4a1" />
<path d="M1526.3 1165.9 L1532.1 1167.8 L1529.2 1174.7 L1524.3 1173.1 Z" fill="#b4e4a1" />
<path d="M1574.0 1162.0 L1581.8 1163.9 L1578.9 1172.7 L1571.1 1170.4 Z" fill="#b4e4a1" />
<path d="M1537.0 1072.4 L1550.6 1076.3 L1546.7 1086.0 L1534.1 1082.1 Z" fill="#e9e1bb" />
<path d="M1550.6 1078.2 L1561.3 1081.2 L1556.5 1089.9 L1547.7 1087.0 Z" fill="#b4e4a1" />
<path d="M1565.2 1088.0 L1586.7 1094.8 L1582.8 1105.5 L1562.3 1097.7 Z" fill="#e9e1bb" />
<path d="M1431.8 1075.3 L1443.5 1078.2 L1440.6 1087.0 L1429.9 1084.1 Z" fill="#e9e1bb" />
<path d="M1443.5 1080.2 L1450.3 1082.1 L1447.4 1090.9 L1440.6 1088.6 Z" fill="#b4e4a1" />
<path d="M1468.8 1080.2 L1485.4 1086.0 L1482.5 1091.9 L1466.9 1086.0 Z" fill="#b4e4a1" />
<ellipse cx="1715.0" cy="1272.0" rx="17" ry="24" fill="#b4e4a1" transform="rotate(8 1715.0 1272.0)"/>
<path d="M1489.3 1137.6 L1458.1 1198.0 L1460.1 1211.6 L1440.6 1237.0" fill="none" stroke="#73cef0" stroke-width="5.4" stroke-linejoin="round" stroke-linecap="round" stroke-linecap="butt"/>
<path d="M1440.6 1239.9 L1415.3 1237.0 L1391.9 1236.0 L1376.3 1244.7 L1360.7 1266.2 L1337.4 1303.9" fill="none" stroke="#73cef0" stroke-width="6.4" stroke-linejoin="round" stroke-linecap="round" />
<path d="M1440.6 1239.9 L1444.5 1258.4 L1464.0 1268.1" fill="none" stroke="#73cef0" stroke-width="5.6" stroke-linejoin="round" stroke-linecap="round" />
<path d="M1395.8 1241.8 L1419.2 1259.3" fill="none" stroke="#73cef0" stroke-width="4.8" stroke-linejoin="round" stroke-linecap="round" stroke-linecap="butt"/>
<path d="M1380.2 1252.5 L1395.8 1266.2" fill="none" stroke="#73cef0" stroke-width="4.8" stroke-linejoin="round" stroke-linecap="round" stroke-linecap="butt"/>
<path d="M1341.3 1297.3 L1356.8 1298.3" fill="none" stroke="#73cef0" stroke-width="3" stroke-linejoin="round" stroke-linecap="round" />
<path d="M1106.2 1251.6 L1225.9 1117.2" fill="none" stroke="#d7dbe9" stroke-width="4.5" stroke-linejoin="round" stroke-linecap="round" />
<path d="M1106.2 1251.6 L1155.8 1297.4 L1175.3 1304.0" fill="none" stroke="#d7dbe9" stroke-width="4.5" stroke-linejoin="round" stroke-linecap="round" />
<path d="M1225.9 1117.2 L1259.1 1201.9" fill="none" stroke="#d7dbe9" stroke-width="3.5999999999999996" stroke-linejoin="round" stroke-linecap="round" />
<path d="M1286.3 1051.9 L1281.5 1064.6 L1253.2 1054.9 L1225.9 1117.2" fill="none" stroke="#d7dbe9" stroke-width="3.8" stroke-linejoin="round" stroke-linecap="round" />
<path d="M1202.6 1285.7 L1253.2 1301.3" fill="none" stroke="#d7dbe9" stroke-width="3.8" stroke-linejoin="round" stroke-linecap="round" />
<path d="M1202.6 1285.7 L1196.7 1304.0" fill="none" stroke="#d7dbe9" stroke-width="3.8" stroke-linejoin="round" stroke-linecap="round" />
<path d="M1296.1 1246.7 L1280.5 1304.0" fill="none" stroke="#d7dbe9" stroke-width="3.4000000000000004" stroke-linejoin="round" stroke-linecap="round" />
<path d="M1303.9 1248.7 L1340.9 1260.4" fill="none" stroke="#d7dbe9" stroke-width="4.2" stroke-linejoin="round" stroke-linecap="round" />
<path d="M1586.7 1051.9 L1572.0 1073.4 L1509.7 1198.0 L1476.6 1252.6 L1449.3 1304.0" fill="none" stroke="#d7dbe9" stroke-width="4.8" stroke-linejoin="round" stroke-linecap="round" />
<path d="M1607.1 1089.0 L1564.3 1163.0 L1540.9 1211.7 L1513.6 1260.4 L1486.3 1304.0" fill="none" stroke="#d7dbe9" stroke-width="8.2" stroke-linejoin="round" stroke-linecap="round" />
<path d="M1591.5 1051.9 L1609.1 1087.0 L1700.0 1252.6" fill="none" stroke="#d7dbe9" stroke-width="5.6000000000000005" stroke-linejoin="round" stroke-linecap="round" />
<path d="M1537.0 1051.9 L1607.1 1087.0 L1629.5 1099.5" fill="none" stroke="#d7dbe9" stroke-width="8.2" stroke-linejoin="round" stroke-linecap="round" />
<path d="M1630.5 1126.0 L1579.8 1225.3 L1544.8 1289.6 L1537.0 1304.0" fill="none" stroke="#d7dbe9" stroke-width="4.0" stroke-linejoin="round" stroke-linecap="round" />
<path d="M1427.9 1153.2 L1511.7 1198.0 L1546.7 1216.5 L1700.0 1291.5" fill="none" stroke="#d7dbe9" stroke-width="4.6" stroke-linejoin="round" stroke-linecap="round" />
<path d="M1435.7 1051.9 L1402.6 1125.0" fill="none" stroke="#d7dbe9" stroke-width="4.0" stroke-linejoin="round" stroke-linecap="round" />
<path d="M1396.7 1051.9 L1371.4 1117.2" fill="none" stroke="#d7dbe9" stroke-width="4.0" stroke-linejoin="round" stroke-linecap="round" />
<path d="M1675.3 1205.8 L1626.6 1304.0" fill="none" stroke="#d7dbe9" stroke-width="3.8" stroke-linejoin="round" stroke-linecap="round" />
<path d="M1651.9 1163.0 L1644.1 1179.5" fill="none" stroke="#d7dbe9" stroke-width="4.2" stroke-linejoin="round" stroke-linecap="round" />
<path d="M1546.7 1051.9 L1572.0 1073.4" fill="none" stroke="#d7dbe9" stroke-width="4.2" stroke-linejoin="round" stroke-linecap="round" />
<path d="M1629.5 1099.5 L1640.0 1106.5 L1873.7 1168.8 L1943.8 1189.2 L2087.9 1195.1" fill="none" stroke="#d7dbe9" stroke-width="11.399999999999999" stroke-linejoin="round" stroke-linecap="round" />
<path d="M1943.8 1184.4 L2087.9 1189.2" fill="none" stroke="#d7dbe9" stroke-width="3.7" stroke-linejoin="round" stroke-linecap="round" />
<path d="M1665.3 1059.7 L1743.2 1100.6 L1908.7 1151.3 L1943.8 1157.1 L2087.9 1163.9" fill="none" stroke="#d7dbe9" stroke-width="5.8" stroke-linejoin="round" stroke-linecap="round" />
<path d="M1640.0 1131.8 L1706.2 1256.4" fill="none" stroke="#d7dbe9" stroke-width="5.6000000000000005" stroke-linejoin="round" stroke-linecap="round" />
<path d="M1776.3 1051.9 L1793.8 1151.3 L1801.6 1205.8 L1813.3 1303.9" fill="none" stroke="#d7dbe9" stroke-width="5.2" stroke-linejoin="round" stroke-linecap="round" />
<path d="M1737.4 1051.9 L1749.1 1131.8 L1751.0 1141.5 L1727.6 1211.6 L1715.9 1254.5" fill="none" stroke="#d7dbe9" stroke-width="4.6" stroke-linejoin="round" stroke-linecap="round" />
<path d="M1857.1 1051.9 L1873.7 1166.8 L1836.7 1303.9" fill="none" stroke="#d7dbe9" stroke-width="4.4" stroke-linejoin="round" stroke-linecap="round" />
<path d="M1901.0 1051.9 L1914.6 1190.2" fill="none" stroke="#d7dbe9" stroke-width="4.0" stroke-linejoin="round" stroke-linecap="round" />
<path d="M1924.3 1051.9 L1947.7 1215.5 L1924.3 1303.9" fill="none" stroke="#d7dbe9" stroke-width="4.4" stroke-linejoin="round" stroke-linecap="round" />
<path d="M1947.7 1215.5 L1949.6 1303.9" fill="none" stroke="#d7dbe9" stroke-width="4.0" stroke-linejoin="round" stroke-linecap="round" />
<path d="M1975.0 1051.9 L1990.5 1159.1 L1984.7 1303.9" fill="none" stroke="#d7dbe9" stroke-width="4.2" stroke-linejoin="round" stroke-linecap="round" />
<path d="M1640.0 1266.2 L1688.7 1287.6 L1708.2 1297.3" fill="none" stroke="#d7dbe9" stroke-width="4.2" stroke-linejoin="round" stroke-linecap="round" />
<path d="M1721.8 1293.4 L1756.8 1293.4 L1788.0 1303.9" fill="none" stroke="#d7dbe9" stroke-width="5.7" stroke-linejoin="round" stroke-linecap="round" />
<path d="M1706.2 1256.4 L1704.3 1279.8 L1714.0 1303.9" fill="none" stroke="#d7dbe9" stroke-width="5.2" stroke-linejoin="round" stroke-linecap="round" />
<path d="M1715.9 1260.3 L1723.7 1279.8 L1729.6 1303.9" fill="none" stroke="#d7dbe9" stroke-width="5.2" stroke-linejoin="round" stroke-linecap="round" />
<path d="M1955.5 1051.9 L1961.3 1073.4" fill="none" stroke="#d7dbe9" stroke-width="3.2" stroke-linejoin="round" stroke-linecap="round" />
<path d="M2065.5 1166.8 L2062.6 1195.1" fill="none" stroke="#d7dbe9" stroke-width="3.8" stroke-linejoin="round" stroke-linecap="round" />
<path d="M1106.2 1251.6 L1225.9 1117.2" fill="none" stroke="#ffffff" stroke-width="3.3" stroke-linejoin="round" stroke-linecap="round" />
<path d="M1106.2 1251.6 L1155.8 1297.4 L1175.3 1304.0" fill="none" stroke="#ffffff" stroke-width="3.3" stroke-linejoin="round" stroke-linecap="round" />
<path d="M1225.9 1117.2 L1259.1 1201.9" fill="none" stroke="#ffffff" stroke-width="2.4" stroke-linejoin="round" stroke-linecap="round" />
<path d="M1286.3 1051.9 L1281.5 1064.6 L1253.2 1054.9 L1225.9 1117.2" fill="none" stroke="#ffffff" stroke-width="2.6" stroke-linejoin="round" stroke-linecap="round" />
<path d="M1202.6 1285.7 L1253.2 1301.3" fill="none" stroke="#ffffff" stroke-width="2.6" stroke-linejoin="round" stroke-linecap="round" />
<path d="M1202.6 1285.7 L1196.7 1304.0" fill="none" stroke="#ffffff" stroke-width="2.6" stroke-linejoin="round" stroke-linecap="round" />
<path d="M1296.1 1246.7 L1280.5 1304.0" fill="none" stroke="#ffffff" stroke-width="2.2" stroke-linejoin="round" stroke-linecap="round" />
<path d="M1303.9 1248.7 L1340.9 1260.4" fill="none" stroke="#ffffff" stroke-width="3" stroke-linejoin="round" stroke-linecap="round" />
<path d="M1586.7 1051.9 L1572.0 1073.4 L1509.7 1198.0 L1476.6 1252.6 L1449.3 1304.0" fill="none" stroke="#ffffff" stroke-width="3.6" stroke-linejoin="round" stroke-linecap="round" />
<path d="M1607.1 1089.0 L1564.3 1163.0 L1540.9 1211.7 L1513.6 1260.4 L1486.3 1304.0" fill="none" stroke="#ffffff" stroke-width="7" stroke-linejoin="round" stroke-linecap="round" />
<path d="M1591.5 1051.9 L1609.1 1087.0 L1700.0 1252.6" fill="none" stroke="#ffffff" stroke-width="4.4" stroke-linejoin="round" stroke-linecap="round" />
<path d="M1537.0 1051.9 L1607.1 1087.0 L1629.5 1099.5" fill="none" stroke="#ffffff" stroke-width="7" stroke-linejoin="round" stroke-linecap="round" />
<path d="M1630.5 1126.0 L1579.8 1225.3 L1544.8 1289.6 L1537.0 1304.0" fill="none" stroke="#ffffff" stroke-width="2.8" stroke-linejoin="round" stroke-linecap="round" />
<path d="M1427.9 1153.2 L1511.7 1198.0 L1546.7 1216.5 L1700.0 1291.5" fill="none" stroke="#ffffff" stroke-width="3.4" stroke-linejoin="round" stroke-linecap="round" />
<path d="M1435.7 1051.9 L1402.6 1125.0" fill="none" stroke="#ffffff" stroke-width="2.8" stroke-linejoin="round" stroke-linecap="round" />
<path d="M1396.7 1051.9 L1371.4 1117.2" fill="none" stroke="#ffffff" stroke-width="2.8" stroke-linejoin="round" stroke-linecap="round" />
<path d="M1675.3 1205.8 L1626.6 1304.0" fill="none" stroke="#ffffff" stroke-width="2.6" stroke-linejoin="round" stroke-linecap="round" />
<path d="M1651.9 1163.0 L1644.1 1179.5" fill="none" stroke="#ffffff" stroke-width="3" stroke-linejoin="round" stroke-linecap="round" />
<path d="M1546.7 1051.9 L1572.0 1073.4" fill="none" stroke="#ffffff" stroke-width="3" stroke-linejoin="round" stroke-linecap="round" />
<path d="M1629.5 1099.5 L1640.0 1106.5 L1873.7 1168.8 L1943.8 1189.2 L2087.9 1195.1" fill="none" stroke="#ffffff" stroke-width="10.2" stroke-linejoin="round" stroke-linecap="round" />
<path d="M1943.8 1184.4 L2087.9 1189.2" fill="none" stroke="#ffffff" stroke-width="2.5" stroke-linejoin="round" stroke-linecap="round" />
<path d="M1665.3 1059.7 L1743.2 1100.6 L1908.7 1151.3 L1943.8 1157.1 L2087.9 1163.9" fill="none" stroke="#ffffff" stroke-width="4.6" stroke-linejoin="round" stroke-linecap="round" />
<path d="M1640.0 1131.8 L1706.2 1256.4" fill="none" stroke="#ffffff" stroke-width="4.4" stroke-linejoin="round" stroke-linecap="round" />
<path d="M1776.3 1051.9 L1793.8 1151.3 L1801.6 1205.8 L1813.3 1303.9" fill="none" stroke="#ffffff" stroke-width="4" stroke-linejoin="round" stroke-linecap="round" />
<path d="M1737.4 1051.9 L1749.1 1131.8 L1751.0 1141.5 L1727.6 1211.6 L1715.9 1254.5" fill="none" stroke="#ffffff" stroke-width="3.4" stroke-linejoin="round" stroke-linecap="round" />
<path d="M1857.1 1051.9 L1873.7 1166.8 L1836.7 1303.9" fill="none" stroke="#ffffff" stroke-width="3.2" stroke-linejoin="round" stroke-linecap="round" />
<path d="M1901.0 1051.9 L1914.6 1190.2" fill="none" stroke="#ffffff" stroke-width="2.8" stroke-linejoin="round" stroke-linecap="round" />
<path d="M1924.3 1051.9 L1947.7 1215.5 L1924.3 1303.9" fill="none" stroke="#ffffff" stroke-width="3.2" stroke-linejoin="round" stroke-linecap="round" />
<path d="M1947.7 1215.5 L1949.6 1303.9" fill="none" stroke="#ffffff" stroke-width="2.8" stroke-linejoin="round" stroke-linecap="round" />
<path d="M1975.0 1051.9 L1990.5 1159.1 L1984.7 1303.9" fill="none" stroke="#ffffff" stroke-width="3" stroke-linejoin="round" stroke-linecap="round" />
<path d="M1640.0 1266.2 L1688.7 1287.6 L1708.2 1297.3" fill="none" stroke="#ffffff" stroke-width="3" stroke-linejoin="round" stroke-linecap="round" />
<path d="M1721.8 1293.4 L1756.8 1293.4 L1788.0 1303.9" fill="none" stroke="#ffffff" stroke-width="4.5" stroke-linejoin="round" stroke-linecap="round" />
<path d="M1706.2 1256.4 L1704.3 1279.8 L1714.0 1303.9" fill="none" stroke="#ffffff" stroke-width="4" stroke-linejoin="round" stroke-linecap="round" />
<path d="M1715.9 1260.3 L1723.7 1279.8 L1729.6 1303.9" fill="none" stroke="#ffffff" stroke-width="4" stroke-linejoin="round" stroke-linecap="round" />
<path d="M1955.5 1051.9 L1961.3 1073.4" fill="none" stroke="#ffffff" stroke-width="2" stroke-linejoin="round" stroke-linecap="round" />
<path d="M2065.5 1166.8 L2062.6 1195.1" fill="none" stroke="#ffffff" stroke-width="2.6" stroke-linejoin="round" stroke-linecap="round" />
<path d="M1194.8 1051.9 L1229.8 1114.3 L1235.7 1131.8" fill="none" stroke="#ffbd8e" stroke-width="5.6" stroke-linejoin="round" stroke-linecap="round" stroke-linecap="butt"/>
<path d="M1240.0 1127.9 L1251.7 1151.3 L1265.3 1176.6" fill="none" stroke="#e8883a" stroke-width="7.2" stroke-linejoin="round" stroke-linecap="round" stroke-linecap="butt"/>
<path d="M1240.0 1127.9 L1251.7 1151.3 L1265.3 1176.6" fill="none" stroke="#ffa35c" stroke-width="5.8" stroke-linejoin="round" stroke-linecap="round" stroke-linecap="butt"/>
<path d="M1310.1 1051.9 L1298.4 1088.9 L1278.9 1137.6 L1267.3 1166.8 L1267.3 1178.5 L1288.7 1215.5 L1304.3 1244.7 L1317.9 1274.0 L1331.5 1303.9" fill="none" stroke="#ef9146" stroke-width="7.4" stroke-linejoin="round" stroke-linecap="round" stroke-linecap="butt"/>
<path d="M1310.1 1051.9 L1298.4 1088.9 L1278.9 1137.6 L1267.3 1166.8 L1267.3 1178.5 L1288.7 1215.5 L1304.3 1244.7 L1317.9 1274.0 L1331.5 1303.9" fill="none" stroke="#ffa35c" stroke-width="6.2" stroke-linejoin="round" stroke-linecap="round" stroke-linecap="butt"/>
<path d="M1265.3 1176.6 L1286.7 1217.5 L1302.3 1246.7" fill="none" stroke="#ffc9a0" stroke-width="0.8" stroke-linejoin="round" stroke-linecap="round" />
<path d="M1281.9 1147.4 L1285.8 1159.1 L1277.0 1178.5" fill="none" stroke="#ffa35c" stroke-width="0.9" stroke-linejoin="round" stroke-linecap="round" />
<path d="M1274.1 1091.9 L1277.0 1076.3 L1374.4 1111.3 L1401.6 1125.9 L1397.7 1136.7" fill="none" stroke="#2b76b8" stroke-width="5.8" stroke-linejoin="round" stroke-linecap="round" stroke-linejoin="miter"/>
<path d="M1274.1 1091.9 L1366.6 1125.9 L1397.7 1136.7 L1426.0 1152.2 L1411.4 1176.6 L1398.7 1204.8 L1440.6 1233.1 L1504.8 1274.0 L1575.0 1303.9" fill="none" stroke="#2b76b8" stroke-width="5.8" stroke-linejoin="round" stroke-linecap="round" stroke-linejoin="miter"/>
<path d="M1366.6 1125.9 L1349.1 1176.6 L1337.4 1211.6 L1327.6 1234.0 L1319.8 1261.3 L1339.3 1271.0 L1351.0 1236.0 L1353.9 1235.0 L1367.6 1190.2 L1393.8 1137.6" fill="none" stroke="#2b76b8" stroke-width="5.8" stroke-linejoin="round" stroke-linecap="round" stroke-linejoin="miter"/>
<path d="M1328.6 1230.1 L1351.0 1237.0" fill="none" stroke="#2b76b8" stroke-width="5.8" stroke-linejoin="round" stroke-linecap="round" stroke-linejoin="miter"/>
<path d="M1325.7 1241.8 L1348.1 1249.6" fill="none" stroke="#2b76b8" stroke-width="5.8" stroke-linejoin="round" stroke-linecap="round" stroke-linejoin="miter"/>
<path d="M1346.1 1259.3 L1368.5 1273.0 L1368.5 1282.7 L1401.6 1297.3 L1415.3 1303.9" fill="none" stroke="#2b76b8" stroke-width="5.8" stroke-linejoin="round" stroke-linecap="round" stroke-linejoin="miter"/>
<path d="M1504.8 1274.0 L1511.7 1262.3 L1575.0 1297.3 L1590.5 1303.9" fill="none" stroke="#2b76b8" stroke-width="5.8" stroke-linejoin="round" stroke-linecap="round" stroke-linejoin="miter"/>
<path d="M1504.8 1274.0 L1497.1 1283.7 L1486.3 1303.9" fill="none" stroke="#2b76b8" stroke-width="5.8" stroke-linejoin="round" stroke-linecap="round" stroke-linejoin="miter"/>
<g transform="translate(1285.8 1095.8) rotate(20)"><path d="M-6.2 0H5.6 M1.6 -3.7L5.8 0L1.6 3.7" fill="none" stroke="#f2f8fd" stroke-width="3.7" stroke-linecap="round" stroke-linejoin="round"/><path d="M-6.2 0H5.6 M1.6 -3.7L5.8 0L1.6 3.7" fill="none" stroke="#4a97d6" stroke-width="1.15" stroke-linecap="round" stroke-linejoin="round"/></g>
<g transform="translate(1323.7 1109.4) rotate(20)"><path d="M-6.2 0H5.6 M1.6 -3.7L5.8 0L1.6 3.7" fill="none" stroke="#f2f8fd" stroke-width="3.7" stroke-linecap="round" stroke-linejoin="round"/><path d="M-6.2 0H5.6 M1.6 -3.7L5.8 0L1.6 3.7" fill="none" stroke="#4a97d6" stroke-width="1.15" stroke-linecap="round" stroke-linejoin="round"/></g>
<g transform="translate(1361.7 1123.0) rotate(20)"><path d="M-6.2 0H5.6 M1.6 -3.7L5.8 0L1.6 3.7" fill="none" stroke="#f2f8fd" stroke-width="3.7" stroke-linecap="round" stroke-linejoin="round"/><path d="M-6.2 0H5.6 M1.6 -3.7L5.8 0L1.6 3.7" fill="none" stroke="#4a97d6" stroke-width="1.15" stroke-linecap="round" stroke-linejoin="round"/></g>
<g transform="translate(1396.8 1140.6) rotate(22)"><path d="M-6.2 0H5.6 M1.6 -3.7L5.8 0L1.6 3.7" fill="none" stroke="#f2f8fd" stroke-width="3.7" stroke-linecap="round" stroke-linejoin="round"/><path d="M-6.2 0H5.6 M1.6 -3.7L5.8 0L1.6 3.7" fill="none" stroke="#4a97d6" stroke-width="1.15" stroke-linecap="round" stroke-linejoin="round"/></g>
<g transform="translate(1412.3 1172.7) rotate(118)"><path d="M-6.2 0H5.6 M1.6 -3.7L5.8 0L1.6 3.7" fill="none" stroke="#f2f8fd" stroke-width="3.7" stroke-linecap="round" stroke-linejoin="round"/><path d="M-6.2 0H5.6 M1.6 -3.7L5.8 0L1.6 3.7" fill="none" stroke="#4a97d6" stroke-width="1.15" stroke-linecap="round" stroke-linejoin="round"/></g>
<g transform="translate(1349.1 1174.6) rotate(108)"><path d="M-6.2 0H5.6 M1.6 -3.7L5.8 0L1.6 3.7" fill="none" stroke="#f2f8fd" stroke-width="3.7" stroke-linecap="round" stroke-linejoin="round"/><path d="M-6.2 0H5.6 M1.6 -3.7L5.8 0L1.6 3.7" fill="none" stroke="#4a97d6" stroke-width="1.15" stroke-linecap="round" stroke-linejoin="round"/></g>
<g transform="translate(1369.5 1196.1) rotate(-72)"><path d="M-6.2 0H5.6 M1.6 -3.7L5.8 0L1.6 3.7" fill="none" stroke="#f2f8fd" stroke-width="3.7" stroke-linecap="round" stroke-linejoin="round"/><path d="M-6.2 0H5.6 M1.6 -3.7L5.8 0L1.6 3.7" fill="none" stroke="#4a97d6" stroke-width="1.15" stroke-linecap="round" stroke-linejoin="round"/></g>
<g transform="translate(1336.4 1209.7) rotate(110)"><path d="M-6.2 0H5.6 M1.6 -3.7L5.8 0L1.6 3.7" fill="none" stroke="#f2f8fd" stroke-width="3.7" stroke-linecap="round" stroke-linejoin="round"/><path d="M-6.2 0H5.6 M1.6 -3.7L5.8 0L1.6 3.7" fill="none" stroke="#4a97d6" stroke-width="1.15" stroke-linecap="round" stroke-linejoin="round"/></g>
<g transform="translate(1355.3 1234.0) rotate(-72)"><path d="M-6.2 0H5.6 M1.6 -3.7L5.8 0L1.6 3.7" fill="none" stroke="#f2f8fd" stroke-width="3.7" stroke-linecap="round" stroke-linejoin="round"/><path d="M-6.2 0H5.6 M1.6 -3.7L5.8 0L1.6 3.7" fill="none" stroke="#4a97d6" stroke-width="1.15" stroke-linecap="round" stroke-linejoin="round"/></g>
<g transform="translate(1320.8 1250.6) rotate(105)"><path d="M-6.2 0H5.6 M1.6 -3.7L5.8 0L1.6 3.7" fill="none" stroke="#f2f8fd" stroke-width="3.7" stroke-linecap="round" stroke-linejoin="round"/><path d="M-6.2 0H5.6 M1.6 -3.7L5.8 0L1.6 3.7" fill="none" stroke="#4a97d6" stroke-width="1.15" stroke-linecap="round" stroke-linejoin="round"/></g>
<g transform="translate(1434.7 1231.1) rotate(32)"><path d="M-6.2 0H5.6 M1.6 -3.7L5.8 0L1.6 3.7" fill="none" stroke="#f2f8fd" stroke-width="3.7" stroke-linecap="round" stroke-linejoin="round"/><path d="M-6.2 0H5.6 M1.6 -3.7L5.8 0L1.6 3.7" fill="none" stroke="#4a97d6" stroke-width="1.15" stroke-linecap="round" stroke-linejoin="round"/></g>
<g transform="translate(1469.8 1252.5) rotate(32)"><path d="M-6.2 0H5.6 M1.6 -3.7L5.8 0L1.6 3.7" fill="none" stroke="#f2f8fd" stroke-width="3.7" stroke-linecap="round" stroke-linejoin="round"/><path d="M-6.2 0H5.6 M1.6 -3.7L5.8 0L1.6 3.7" fill="none" stroke="#4a97d6" stroke-width="1.15" stroke-linecap="round" stroke-linejoin="round"/></g>
<g transform="translate(1502.9 1274.0) rotate(32)"><path d="M-6.2 0H5.6 M1.6 -3.7L5.8 0L1.6 3.7" fill="none" stroke="#f2f8fd" stroke-width="3.7" stroke-linecap="round" stroke-linejoin="round"/><path d="M-6.2 0H5.6 M1.6 -3.7L5.8 0L1.6 3.7" fill="none" stroke="#4a97d6" stroke-width="1.15" stroke-linecap="round" stroke-linejoin="round"/></g>
<g transform="translate(1537.0 1295.4) rotate(30)"><path d="M-6.2 0H5.6 M1.6 -3.7L5.8 0L1.6 3.7" fill="none" stroke="#f2f8fd" stroke-width="3.7" stroke-linecap="round" stroke-linejoin="round"/><path d="M-6.2 0H5.6 M1.6 -3.7L5.8 0L1.6 3.7" fill="none" stroke="#4a97d6" stroke-width="1.15" stroke-linecap="round" stroke-linejoin="round"/></g>
<g transform="translate(1486.3 1298.3) rotate(118)"><path d="M-6.2 0H5.6 M1.6 -3.7L5.8 0L1.6 3.7" fill="none" stroke="#f2f8fd" stroke-width="3.7" stroke-linecap="round" stroke-linejoin="round"/><path d="M-6.2 0H5.6 M1.6 -3.7L5.8 0L1.6 3.7" fill="none" stroke="#4a97d6" stroke-width="1.15" stroke-linecap="round" stroke-linejoin="round"/></g>
<g transform="translate(1408.5 1299.3) rotate(205)"><path d="M-6.2 0H5.6 M1.6 -3.7L5.8 0L1.6 3.7" fill="none" stroke="#f2f8fd" stroke-width="3.7" stroke-linecap="round" stroke-linejoin="round"/><path d="M-6.2 0H5.6 M1.6 -3.7L5.8 0L1.6 3.7" fill="none" stroke="#4a97d6" stroke-width="1.15" stroke-linecap="round" stroke-linejoin="round"/></g>
<g transform="translate(1320.8 1284.7)"><path d="M-13 -8 Q-9 -6 -6.5 -8.5 Q0 -6 6.5 -8.5 Q9 -6 13 -8 L13.5 -5 L13.5 0 Q12 7 0 10.5 Q-12 7 -13.5 0 L-13.5 -5Z" fill="#4759c4" stroke="#fff" stroke-width="1"/><path d="M-13 -8 Q-9 -6 -6.5 -8.5 Q0 -6 6.5 -8.5 Q9 -6 13 -8 L13.6 -3.5 H-13.6Z" fill="#d8363f"/><text x="0" y="5" text-anchor="middle" font-family="Liberation Sans, sans-serif" font-weight="700" font-size="9.5" fill="#fff">278</text></g>
<g transform="translate(1618.8 1087.0)"><circle r="8.6" fill="#4058c8"/><text x="-0.3" y="3.1" text-anchor="middle" font-family="Liberation Sans, sans-serif" font-weight="700" font-style="italic" font-size="8.6" fill="#fff" letter-spacing="-0.9">MTA</text></g>
<g transform="translate(1539.9 1216.5)"><circle r="8.6" fill="#4058c8"/><text x="-0.3" y="3.1" text-anchor="middle" font-family="Liberation Sans, sans-serif" font-weight="700" font-style="italic" font-size="8.6" fill="#fff" letter-spacing="-0.9">MTA</text></g>
<g transform="translate(1772.4 1109.0)"><circle r="8.6" fill="#4058c8"/><text x="-0.3" y="3.1" text-anchor="middle" font-family="Liberation Sans, sans-serif" font-weight="700" font-style="italic" font-size="8.6" fill="#fff" letter-spacing="-0.9">MTA</text></g>
<g transform="translate(1908.4 1151.9)"><circle r="8.6" fill="#4058c8"/><text x="-0.3" y="3.1" text-anchor="middle" font-family="Liberation Sans, sans-serif" font-weight="700" font-style="italic" font-size="8.6" fill="#fff" letter-spacing="-0.9">MTA</text></g>
<g transform="translate(1991.5 1159.6)"><circle r="8.6" fill="#4058c8"/><text x="-0.3" y="3.1" text-anchor="middle" font-family="Liberation Sans, sans-serif" font-weight="700" font-style="italic" font-size="8.6" fill="#fff" letter-spacing="-0.9">MTA</text></g>
<g transform="translate(1705.8 1256.4)"><circle r="8.6" fill="#4058c8"/><text x="-0.3" y="3.1" text-anchor="middle" font-family="Liberation Sans, sans-serif" font-weight="700" font-style="italic" font-size="8.6" fill="#fff" letter-spacing="-0.9">MTA</text></g>
<g transform="translate(1882.5 1258.4)"><circle r="8.6" fill="#4058c8"/><text x="-0.3" y="3.1" text-anchor="middle" font-family="Liberation Sans, sans-serif" font-weight="700" font-style="italic" font-size="8.6" fill="#fff" letter-spacing="-0.9">MTA</text></g>
<g transform="translate(1793.8 1308.0)"><circle r="8.6" fill="#4058c8"/><text x="-0.3" y="3.1" text-anchor="middle" font-family="Liberation Sans, sans-serif" font-weight="700" font-style="italic" font-size="8.6" fill="#fff" letter-spacing="-0.9">MTA</text></g>
<rect x="1432.6" y="1044.9" width="16" height="13" fill="#4058c8"/><path d="M1436.6 1048.9h8v5h-8z" fill="none" stroke="#fff" stroke-width="1.2"/>
<rect x="1649.1" y="1049.8" width="16" height="13" fill="#4058c8"/><path d="M1653.1 1053.8h8v5h-8z" fill="none" stroke="#fff" stroke-width="1.2"/>
<text transform="translate(1365.6 1096.7) rotate(21)" text-anchor="middle" dominant-baseline="central" font-family="Liberation Sans, sans-serif" font-size="11.8" font-weight="400" fill="#47494c" letter-spacing="0" stroke="#f3f2ef" stroke-width="2.2" paint-order="stroke" stroke-linejoin="round" >Degraw St</text>
<text transform="translate(1417.6 1091.9) rotate(24)" text-anchor="middle" dominant-baseline="central" font-family="Liberation Sans, sans-serif" font-size="11.8" font-weight="400" fill="#47494c" letter-spacing="0" stroke="#f3f2ef" stroke-width="2.2" paint-order="stroke" stroke-linejoin="round" >Butler St</text>
<text transform="translate(1346.1 1143.1) rotate(20)" text-anchor="middle" dominant-baseline="central" font-family="Liberation Sans, sans-serif" font-size="11.8" font-weight="400" fill="#47494c" letter-spacing="0" stroke="#f3f2ef" stroke-width="2.2" paint-order="stroke" stroke-linejoin="round" >Carroll St</text>
<text transform="translate(1315.0 1193.1) rotate(-69)" text-anchor="middle" dominant-baseline="central" font-family="Liberation Sans, sans-serif" font-size="11.8" font-weight="400" fill="#47494c" letter-spacing="0" stroke="#f3f2ef" stroke-width="2.2" paint-order="stroke" stroke-linejoin="round" >Clinton St</text>
<text transform="translate(1402.6 1193.1) rotate(30)" text-anchor="middle" dominant-baseline="central" font-family="Liberation Sans, sans-serif" font-size="11.8" font-weight="400" fill="#47494c" letter-spacing="0" stroke="#f3f2ef" stroke-width="2.2" paint-order="stroke" stroke-linejoin="round" >2nd St</text>
<text transform="translate(1534.1 1137.6) rotate(26)" text-anchor="middle" dominant-baseline="central" font-family="Liberation Sans, sans-serif" font-size="11.8" font-weight="400" fill="#47494c" letter-spacing="0" stroke="#f3f2ef" stroke-width="2.2" paint-order="stroke" stroke-linejoin="round" >Baltic St</text>
<text transform="translate(1601.2 1242.8) rotate(28)" text-anchor="middle" dominant-baseline="central" font-family="Liberation Sans, sans-serif" font-size="13.5" font-weight="400" fill="#47494c" letter-spacing="0" stroke="#f3f2ef" stroke-width="2.2" paint-order="stroke" stroke-linejoin="round" >Union St</text>
<text transform="translate(1561.3 1278.8) rotate(30)" text-anchor="middle" dominant-baseline="central" font-family="Liberation Sans, sans-serif" font-size="11.8" font-weight="400" fill="#47494c" letter-spacing="0" stroke="#f3f2ef" stroke-width="2.2" paint-order="stroke" stroke-linejoin="round" >1st St</text>
<text transform="translate(1455.2 1301.2) rotate(28)" text-anchor="middle" dominant-baseline="central" font-family="Liberation Sans, sans-serif" font-size="11.8" font-weight="400" fill="#47494c" letter-spacing="0" stroke="#f3f2ef" stroke-width="2.2" paint-order="stroke" stroke-linejoin="round" >7th St</text>
<text transform="translate(1624.6 1301.6) rotate(27)" text-anchor="middle" dominant-baseline="central" font-family="Liberation Sans, sans-serif" font-size="11.8" font-weight="400" fill="#47494c" letter-spacing="0" stroke="#f3f2ef" stroke-width="2.2" paint-order="stroke" stroke-linejoin="round" >Garfield Pl</text>
<text transform="translate(1468.8 1181.5) rotate(0)" text-anchor="middle" dominant-baseline="central" font-family="Liberation Sans, sans-serif" font-size="12" font-weight="400" fill="#8488b3" letter-spacing="1.6" stroke="#eeeeee" stroke-width="1.5" paint-order="stroke" stroke-linejoin="round" >GOWANUS</text>
<text transform="translate(1219.1 1079.2) rotate(0)" text-anchor="middle" dominant-baseline="central" font-family="Liberation Sans, sans-serif" font-size="12.3" font-weight="700" fill="#94887e" letter-spacing="0" stroke="#f3f2ef" stroke-width="1.5" paint-order="stroke" stroke-linejoin="round" >Brooklyn Port</text>
<text transform="translate(1219.1 1093.8) rotate(0)" text-anchor="middle" dominant-baseline="central" font-family="Liberation Sans, sans-serif" font-size="12.3" font-weight="700" fill="#94887e" letter-spacing="0" stroke="#f3f2ef" stroke-width="1.5" paint-order="stroke" stroke-linejoin="round" >Authority Marine</text>
<text transform="translate(1219.1 1108.4) rotate(0)" text-anchor="middle" dominant-baseline="central" font-family="Liberation Sans, sans-serif" font-size="12.3" font-weight="700" fill="#94887e" letter-spacing="0" stroke="#f3f2ef" stroke-width="1.5" paint-order="stroke" stroke-linejoin="round" >Terminal</text>
<circle cx="1219.7" cy="1065.6" r="1.6" fill="#8a5a3c"/>
<text transform="translate(1041.9 1069.5) rotate(-27)" text-anchor="middle" dominant-baseline="central" font-family="Liberation Sans, sans-serif" font-size="11.5" font-weight="400" fill="#47494c" letter-spacing="0" stroke="#f3f2ef" stroke-width="2.2" paint-order="stroke" stroke-linejoin="round" >Craig Rd S</text>
<text transform="translate(1186.0 1253.5) rotate(0)" text-anchor="middle" dominant-baseline="central" font-family="Liberation Sans, sans-serif" font-size="12" font-weight="400" fill="#8488b3" letter-spacing="1.8" stroke="#eeeeee" stroke-width="1.5" paint-order="stroke" stroke-linejoin="round" >RED HOOK</text>
<text transform="translate(1134.4 1278.9) rotate(43)" text-anchor="middle" dominant-baseline="central" font-family="Liberation Sans, sans-serif" font-size="13.5" font-weight="400" fill="#47494c" letter-spacing="0" stroke="#f3f2ef" stroke-width="2.2" paint-order="stroke" stroke-linejoin="round" >Beard St</text>
<text transform="translate(1232.8 1295.0) rotate(22)" text-anchor="middle" dominant-baseline="central" font-family="Liberation Sans, sans-serif" font-size="13" font-weight="400" fill="#47494c" letter-spacing="0" stroke="#f3f2ef" stroke-width="2.2" paint-order="stroke" stroke-linejoin="round" >Bay St</text>
<text transform="translate(1008.2 1282.8) rotate(90)" text-anchor="start" dominant-baseline="central" font-family="Liberation Sans, sans-serif" font-size="11.5" font-weight="400" fill="#3f8fd6" letter-spacing="0" stroke="#75cff0" stroke-width="1" paint-order="stroke" stroke-linejoin="round" font-style="italic">Red Hook Channel</text>
<text transform="translate(751.0 1253.5) rotate(-66)" text-anchor="end" dominant-baseline="central" font-family="Liberation Sans, sans-serif" font-size="11.5" font-weight="400" fill="#3f8fd6" letter-spacing="0" stroke="#75cff0" stroke-width="1" paint-order="stroke" stroke-linejoin="round" font-style="italic">Hudson River</text>
<text transform="translate(1740.3 1054.9) rotate(-8)" text-anchor="middle" dominant-baseline="central" font-family="Liberation Sans, sans-serif" font-size="11.8" font-weight="400" fill="#47494c" letter-spacing="0" stroke="#f3f2ef" stroke-width="2.2" paint-order="stroke" stroke-linejoin="round" >Greene Ave</text>
<text transform="translate(1700.8 1086.0) rotate(80)" text-anchor="end" dominant-baseline="central" font-family="Liberation Sans, sans-serif" font-size="11.8" font-weight="400" fill="#47494c" letter-spacing="0" stroke="#f3f2ef" stroke-width="2.2" paint-order="stroke" stroke-linejoin="round" >Clinton Ave</text>
<text transform="translate(1799.3 1091.9) rotate(80)" text-anchor="end" dominant-baseline="central" font-family="Liberation Sans, sans-serif" font-size="11.8" font-weight="400" fill="#47494c" letter-spacing="0" stroke="#f3f2ef" stroke-width="2.2" paint-order="stroke" stroke-linejoin="round" >St James Pl</text>
<text transform="translate(1822.1 1078.2) rotate(79)" text-anchor="middle" dominant-baseline="central" font-family="Liberation Sans, sans-serif" font-size="11.8" font-weight="400" fill="#47494c" letter-spacing="0" stroke="#f3f2ef" stroke-width="2.2" paint-order="stroke" stroke-linejoin="round" >Grand Ave</text>
<text transform="translate(1905.2 1119.1) rotate(80)" text-anchor="end" dominant-baseline="central" font-family="Liberation Sans, sans-serif" font-size="11.8" font-weight="400" fill="#47494c" letter-spacing="0" stroke="#f3f2ef" stroke-width="2.2" paint-order="stroke" stroke-linejoin="round" >Franklin Ave</text>
<text transform="translate(1958.4 1113.3) rotate(-9)" text-anchor="middle" dominant-baseline="central" font-family="Liberation Sans, sans-serif" font-size="11.8" font-weight="400" fill="#47494c" letter-spacing="0" stroke="#f3f2ef" stroke-width="2.2" paint-order="stroke" stroke-linejoin="round" >Jefferson Ave</text>
<text transform="translate(2029.5 1141.5) rotate(-9)" text-anchor="middle" dominant-baseline="central" font-family="Liberation Sans, sans-serif" font-size="11.8" font-weight="400" fill="#47494c" letter-spacing="0" stroke="#f3f2ef" stroke-width="2.2" paint-order="stroke" stroke-linejoin="round" >Macon St</text>
<text transform="translate(1713.0 1169.8) rotate(14)" text-anchor="middle" dominant-baseline="central" font-family="Liberation Sans, sans-serif" font-size="11.8" font-weight="400" fill="#47494c" letter-spacing="0" stroke="#f3f2ef" stroke-width="2.2" paint-order="stroke" stroke-linejoin="round" >Bergen St</text>
<text transform="translate(1654.6 1197.4) rotate(30)" text-anchor="middle" dominant-baseline="central" font-family="Liberation Sans, sans-serif" font-size="11.8" font-weight="400" fill="#47494c" letter-spacing="0" stroke="#f3f2ef" stroke-width="2.2" paint-order="stroke" stroke-linejoin="round" >Park Pl</text>
<text transform="translate(1737.4 1196.1) rotate(0)" text-anchor="middle" dominant-baseline="central" font-family="Liberation Sans, sans-serif" font-size="12" font-weight="400" fill="#8488b3" letter-spacing="1.6" stroke="#eeeeee" stroke-width="1.5" paint-order="stroke" stroke-linejoin="round" >PROSPECT</text>
<text transform="translate(1737.4 1212.6) rotate(0)" text-anchor="middle" dominant-baseline="central" font-family="Liberation Sans, sans-serif" font-size="12" font-weight="400" fill="#8488b3" letter-spacing="1.6" stroke="#eeeeee" stroke-width="1.5" paint-order="stroke" stroke-linejoin="round" >HEIGHTS</text>
<text transform="translate(1712.4 1236.0) rotate(16)" text-anchor="middle" dominant-baseline="central" font-family="Liberation Sans, sans-serif" font-size="11.8" font-weight="400" fill="#47494c" letter-spacing="0" stroke="#f3f2ef" stroke-width="2.2" paint-order="stroke" stroke-linejoin="round" >Sterling Pl</text>
<text transform="translate(1807.5 1253.5) rotate(78)" text-anchor="middle" dominant-baseline="central" font-family="Liberation Sans, sans-serif" font-size="13.2" font-weight="400" fill="#47494c" letter-spacing="0" stroke="#f3f2ef" stroke-width="2.2" paint-order="stroke" stroke-linejoin="round" >Washington Ave</text>
<text transform="translate(1648.8 1256.4) rotate(-56)" text-anchor="middle" dominant-baseline="central" font-family="Liberation Sans, sans-serif" font-size="12.5" font-weight="400" fill="#47494c" letter-spacing="0" stroke="#f3f2ef" stroke-width="2.2" paint-order="stroke" stroke-linejoin="round" >7th Ave</text>
<text transform="translate(1948.1 1258.4) rotate(-88)" text-anchor="end" dominant-baseline="central" font-family="Liberation Sans, sans-serif" font-size="11.8" font-weight="400" fill="#47494c" letter-spacing="0" stroke="#f3f2ef" stroke-width="2.2" paint-order="stroke" stroke-linejoin="round" >Rogers Ave</text>
<text transform="translate(1984.3 1260.7) rotate(-88)" text-anchor="end" dominant-baseline="central" font-family="Liberation Sans, sans-serif" font-size="11.8" font-weight="400" fill="#47494c" letter-spacing="0" stroke="#f3f2ef" stroke-width="2.2" paint-order="stroke" stroke-linejoin="round" >Nostrand Ave</text>
<text transform="translate(2011.0 1238.5) rotate(3)" text-anchor="middle" dominant-baseline="central" font-family="Liberation Sans, sans-serif" font-size="11.8" font-weight="400" fill="#47494c" letter-spacing="0" stroke="#f3f2ef" stroke-width="2.2" paint-order="stroke" stroke-linejoin="round" >Bergen St</text>
<text transform="translate(2065.5 1097.7) rotate(0)" text-anchor="start" dominant-baseline="central" font-family="Liberation Sans, sans-serif" font-size="12" font-weight="400" fill="#8488b3" letter-spacing="1.6" stroke="#eeeeee" stroke-width="1.5" paint-order="stroke" stroke-linejoin="round" >BED</text>
<text transform="translate(2057.4 1114.3) rotate(0)" text-anchor="start" dominant-baseline="central" font-family="Liberation Sans, sans-serif" font-size="12" font-weight="400" fill="#8488b3" letter-spacing="1.6" stroke="#eeeeee" stroke-width="1.5" paint-order="stroke" stroke-linejoin="round" >STUY</text>
<text transform="translate(2046.1 1303.2) rotate(2)" text-anchor="start" dominant-baseline="central" font-family="Liberation Sans, sans-serif" font-size="11.8" font-weight="400" fill="#47494c" letter-spacing="0" stroke="#f3f2ef" stroke-width="2.2" paint-order="stroke" stroke-linejoin="round" >Sterling Pl</text>
<rect x="1260.3" y="1115.0" width="5.5" height="4.5" fill="#2b76b8"/>
<g transform="translate(1267.3 1102.6)"><path d="M0 16.8 C-3 12.5 -11.2 7 -11.2 0 A11.2 11.2 0 1 1 11.2 0 C11.2 7 3 12.5 0 16.8Z" fill="#003f8c"/><text x="0" y="3.6" text-anchor="middle" font-family="Liberation Sans, sans-serif" font-weight="700" font-size="10.5" fill="#fff">1</text></g>
<g transform="translate(1325.7 1217.9)"><path d="M0 16.8 C-3 12.5 -11.2 7 -11.2 0 A11.2 11.2 0 1 1 11.2 0 C11.2 7 3 12.5 0 16.8Z" fill="#003f8c"/><text x="0" y="3.6" text-anchor="middle" font-family="Liberation Sans, sans-serif" font-weight="700" font-size="10.5" fill="#fff">4</text></g>
<g transform="translate(1353.5 1279.2)"><path d="M0 16.8 C-3 12.5 -11.2 7 -11.2 0 A11.2 11.2 0 1 1 11.2 0 C11.2 7 3 12.5 0 16.8Z" fill="#e1162c"/><text x="0" y="3.6" text-anchor="middle" font-family="Liberation Sans, sans-serif" font-weight="700" font-size="10.5" fill="#fff">6</text></g>
<g transform="translate(1381.2 1279.2)"><path d="M0 16.8 C-3 12.5 -11.2 7 -11.2 0 A11.2 11.2 0 1 1 11.2 0 C11.2 7 3 12.5 0 16.8Z" fill="#3d9629"/><text x="0" y="3.6" text-anchor="middle" font-family="Liberation Sans, sans-serif" font-weight="700" font-size="10.5" fill="#fff">0</text></g>
<g transform="translate(1612.0 1311.9)"><path d="M0 16.8 C-3 12.5 -11.2 7 -11.2 0 A11.2 11.2 0 1 1 11.2 0 C11.2 7 3 12.5 0 16.8Z" fill="#003f8c"/><text x="0" y="3.6" text-anchor="middle" font-family="Liberation Sans, sans-serif" font-weight="700" font-size="10.5" fill="#fff">2</text></g>
</svg>
<!-- map controls -->
<div class="ctrl" style="top:1063px;height:31px"></div>
<div class="ctrl" style="top:1105px;height:32px"></div>
<div class="ctrl" style="top:1148.2px;height:95.8px"></div>
<div class="a" style="left:724px;top:1180px;width:32px;height:1.1px;background:#ddd"></div>
<div class="a" style="left:724px;top:1212px;width:32px;height:1.1px;background:#ddd"></div>
<svg class="a" style="left:724px;top:1063px" width="32" height="182" fill="none" stroke="#333" stroke-linecap="round">
 <!-- geolocate -->
 <circle cx="16" cy="15.5" r="6.4" stroke-width="2.5"/><circle cx="16" cy="15.5" r="2.9" fill="#333" stroke="none"/>
 <path d="M14.5 8.3L16 6.3L17.5 8.3ZM14.5 22.7L16 24.7L17.5 22.7ZM8.8 14L6.8 15.5L8.8 17ZM23.2 14L25.2 15.5L23.2 17Z" fill="#333" stroke="#333" stroke-width="0.5" stroke-linejoin="round"/>
 <!-- fullscreen -->
 <g fill="#333" stroke="#333" stroke-width="0.9" stroke-linejoin="round" transform="translate(16 57.9)">
  <path d="M-9.9 -9.9H-2.3L-5.3 -6.9L-0.9 -1.9L-1.9 -0.9L-6.9 -5.3L-9.9 -2.3Z"/>
  <path d="M9.9 -9.9V-2.3L6.9 -5.3L1.9 -0.9L0.9 -1.9L5.3 -6.9L2.3 -9.9Z"/>
  <path d="M9.9 9.9H2.3L5.3 6.9L0.9 1.9L1.9 0.9L6.9 5.3L9.9 2.3Z"/>
  <path d="M-9.9 9.9V2.3L-6.9 5.3L-1.9 0.9L-0.9 1.9L-5.3 6.9L-2.3 9.9Z"/>
 </g>
 <!-- plus / minus -->
 <path d="M10.8 101H21.2M16 95.8V106.2" stroke-width="3.2"/>
 <path d="M10.8 133.3H21.2" stroke-width="3.2"/>
 <!-- compass -->
 <path d="M16 156.5L20.2 165.5H11.8Z" fill="#333" stroke="none"/><path d="M16 176L20.2 167.3H11.8Z" fill="#ccc" stroke="none"/>
</svg>
<span class="t" style="left:38.27px;top:9.49px;font-size:18.2px;font-weight:700;color:#ffffff;letter-spacing:-0.896px;">Hudson Shipping Co</span>
<span class="t" style="left:7.00px;top:70.29px;font-size:14.9px;color:#c3c6cd;letter-spacing:0.620px;">Home</span>
<span class="t" style="left:7.00px;top:110.19px;font-size:14.9px;color:#c3c6cd;letter-spacing:0.641px;">Depots</span>
<span class="t" style="left:7.00px;top:150.29px;font-size:14.9px;color:#c3c6cd;letter-spacing:0.261px;">Routes</span>
<span class="t" style="left:7.00px;top:189.19px;font-size:14.9px;color:#c3c6cd;letter-spacing:0.521px;">Fleet</span>
<span class="t" style="left:7.00px;top:229.39px;font-size:14.9px;color:#c3c6cd;letter-spacing:0.291px;">Deliveries</span>
<span class="t" style="left:7.00px;top:268.29px;font-size:14.9px;color:#c3c6cd;letter-spacing:0.379px;">Dispatcher</span>
<span class="t" style="left:7.00px;top:308.19px;font-size:14.9px;color:#c3c6cd;letter-spacing:0.483px;">Availability</span>
<span class="t" style="left:7.00px;top:348.39px;font-size:14.9px;color:#c3c6cd;letter-spacing:0.406px;">Availability Overview</span>
<span class="t" style="left:7.00px;top:387.19px;font-size:14.9px;color:#c3c6cd;letter-spacing:0.533px;">Route Optimization</span>
<span class="t" style="left:7.00px;top:427.09px;font-size:14.9px;color:#c3c6cd;letter-spacing:-0.110px;">Api Keys</span>
<span class="t" style="left:25.18px;top:474.26px;font-size:15.4px;color:#ffffff;letter-spacing:0.079px;">New Delivery</span>
<span class="t" style="left:25.18px;top:531.26px;font-size:15.4px;color:#ffffff;letter-spacing:0.085px;">New Route</span>
<span class="t" style="left:13.39px;top:1207.86px;font-size:12.8px;font-weight:700;color:#ffffff;letter-spacing:0.152px;">Jane Doe</span>
<span class="t" style="left:13.38px;top:1227.70px;font-size:13.0px;color:#5a80b8;letter-spacing:0.416px;">View Profile</span>
<span class="t" style="left:13.39px;top:1281.56px;font-size:12.8px;font-weight:700;color:#ffffff;letter-spacing:0.069px;">Sign out</span>
<span class="t" style="left:694.37px;top:51.76px;font-size:10.8px;font-weight:700;color:#5f6777;letter-spacing:0.163px;">ROUTE DETAILS</span>
<span class="t" style="left:693.98px;top:72.26px;font-size:20.6px;font-weight:700;color:#141c2e;letter-spacing:0.925px;">Route #31</span>
<span class="t" style="left:1837.58px;top:65.26px;font-size:15.4px;color:#f2faf3;letter-spacing:-0.011px;">Mark as Complete</span>
<span class="t" style="left:2043.28px;top:65.26px;font-size:15.4px;color:#ffffff;letter-spacing:-0.015px;">Delete</span>
<span class="t" style="left:712.99px;top:129.73px;font-size:17.8px;color:#2363b3;letter-spacing:0.196px;">Brooklyn Grocery Store route</span>
<span class="t" style="left:713.27px;top:189.86px;font-size:10.8px;font-weight:700;color:#5f6777;letter-spacing:0.270px;">DRIVER</span>
<span class="t" style="left:946.37px;top:189.86px;font-size:10.8px;font-weight:700;color:#5f6777;letter-spacing:0.051px;">STATUS</span>
<span class="t" style="left:1179.67px;top:189.86px;font-size:10.8px;font-weight:700;color:#5f6777;letter-spacing:0.307px;">START TIME</span>
<span class="t" style="left:1413.57px;top:189.86px;font-size:10.8px;font-weight:700;color:#5f6777;letter-spacing:0.465px;">END TIME</span>
<span class="t" style="left:1647.17px;top:189.86px;font-size:10.8px;font-weight:700;color:#5f6777;letter-spacing:0.594px;">DURATION</span>
<span class="t" style="left:1880.67px;top:189.86px;font-size:10.8px;font-weight:700;color:#5f6777;letter-spacing:0.166px;">START DEPOT</span>
<span class="t" style="left:713.27px;top:286.86px;font-size:10.8px;font-weight:700;color:#5f6777;letter-spacing:0.243px;">END DEPOT</span>
<span class="t" style="left:946.37px;top:286.86px;font-size:10.8px;font-weight:700;color:#5f6777;letter-spacing:0.225px;">VEHICLE</span>
<span class="t" style="left:1179.67px;top:286.86px;font-size:10.8px;font-weight:700;color:#5f6777;letter-spacing:0.204px;">TOTAL STOPS</span>
<span class="t" style="left:1413.57px;top:286.86px;font-size:10.8px;font-weight:700;color:#5f6777;letter-spacing:0.161px;">DELIVERIES</span>
<span class="t" style="left:1647.17px;top:286.86px;font-size:10.8px;font-weight:700;color:#5f6777;letter-spacing:-0.179px;">PROGRESS</span>
<span class="t" style="left:712.60px;top:212.20px;font-size:15.0px;letter-spacing:0.714px;">jdoe</span>
<span class="t" style="left:954.40px;top:213.83px;font-size:12.6px;font-weight:700;color:#2fb046;letter-spacing:0.484px;">COMPLETE</span>
<span class="t" style="left:1179.70px;top:212.20px;font-size:15.0px;letter-spacing:-0.196px;">Sched.:</span>
<span class="t" style="left:1179.70px;top:239.20px;font-size:15.0px;letter-spacing:0.357px;">Actual:</span>
<span class="t" style="left:1242.48px;top:213.30px;font-size:13.0px;font-weight:700;color:#2a6bbf;letter-spacing:0.892px;">02/03/26 6:10 AM</span>
<span class="t" style="left:1242.48px;top:240.30px;font-size:13.0px;font-weight:700;color:#35ae4a;letter-spacing:0.892px;">02/03/26 6:12 AM</span>
<span class="t" style="left:1413.60px;top:212.20px;font-size:15.0px;letter-spacing:-0.196px;">Sched.:</span>
<span class="t" style="left:1413.60px;top:239.20px;font-size:15.0px;letter-spacing:0.357px;">Actual:</span>
<span class="t" style="left:1476.48px;top:213.30px;font-size:13.0px;font-weight:700;color:#2a6bbf;letter-spacing:0.892px;">02/03/26 7:45 AM</span>
<span class="t" style="left:1476.48px;top:240.30px;font-size:13.0px;font-weight:700;color:#35ae4a;letter-spacing:0.858px;">02/03/26 7:AM PM</span>
<span class="t" style="left:1647.20px;top:212.20px;font-size:15.0px;letter-spacing:0.314px;">Estimated:</span>
<span class="t" style="left:1647.20px;top:239.20px;font-size:15.0px;letter-spacing:0.373px;">Actual:</span>
<span class="t" style="left:1735.90px;top:212.20px;font-size:15.0px;font-weight:700;color:#141c2e;letter-spacing:-0.081px;">1h 35m</span>
<span class="t" style="left:1735.30px;top:239.20px;font-size:15.0px;font-weight:700;color:#141c2e;letter-spacing:-0.090px;">0h 0m</span>
<span class="t" style="left:1880.70px;top:212.20px;font-size:15.0px;letter-spacing:-0.626px;">BK-01</span>
<span class="t" style="left:713.30px;top:309.10px;font-size:15.0px;letter-spacing:-0.626px;">BK-01</span>
<span class="t" style="left:947.20px;top:309.10px;font-size:15.0px;color:#2a65ae;">1</span>
<span class="t" style="left:1180.00px;top:309.10px;font-size:15.0px;">7</span>
<span class="t" style="left:1413.80px;top:309.10px;font-size:15.0px;">5</span>
<span class="t" style="left:1647.20px;top:324.60px;font-size:15.0px;letter-spacing:0.402px;"><b>100%</b> (<b>5</b> completed / <b>5</b> total</span>
<span class="t" style="left:1647.20px;top:347.40px;font-size:15.0px;letter-spacing:0.228px;">stops)</span>
<span class="t" style="left:713.79px;top:435.13px;font-size:15.2px;letter-spacing:0.017px;">Stops</span>
<span class="t" style="left:780.99px;top:435.13px;font-size:15.2px;color:#626976;letter-spacing:0.136px;">Deliveries</span>
<span class="t" style="left:731.60px;top:500.70px;font-size:15.0px;color:#181d1f;letter-spacing:0.668px;-webkit-text-stroke:0.55px #181d1f;">Number</span>
<span class="t" style="left:1188.60px;top:500.70px;font-size:15.0px;color:#181d1f;letter-spacing:0.556px;-webkit-text-stroke:0.55px #181d1f;">Type</span>
<span class="t" style="left:1646.30px;top:501.79px;font-size:14.9px;color:#181d1f;letter-spacing:0.635px;">Status</span>
<span class="t" style="left:731.70px;top:553.39px;font-size:14.9px;color:#181d1f;">0</span>
<span class="t" style="left:1188.60px;top:553.39px;font-size:14.9px;color:#181d1f;letter-spacing:1.081px;">start</span>
<span class="t" style="left:731.70px;top:598.69px;font-size:14.9px;color:#181d1f;">1</span>
<span class="t" style="left:1188.60px;top:598.69px;font-size:14.9px;color:#181d1f;letter-spacing:0.472px;">pickupShipment</span>
<span class="t" style="left:731.70px;top:645.99px;font-size:14.9px;color:#181d1f;">2</span>
<span class="t" style="left:1188.60px;top:645.99px;font-size:14.9px;color:#181d1f;letter-spacing:0.501px;">deliverShipment</span>
<span class="t" style="left:731.70px;top:692.29px;font-size:14.9px;color:#181d1f;">3</span>
<span class="t" style="left:1188.60px;top:692.29px;font-size:14.9px;color:#181d1f;letter-spacing:0.501px;">deliverShipment</span>
<span class="t" style="left:731.70px;top:737.59px;font-size:14.9px;color:#181d1f;">4</span>
<span class="t" style="left:1188.60px;top:737.59px;font-size:14.9px;color:#181d1f;letter-spacing:0.501px;">deliverShipment</span>
<span class="t" style="left:731.70px;top:783.89px;font-size:14.9px;color:#181d1f;">5</span>
<span class="t" style="left:1188.60px;top:783.89px;font-size:14.9px;color:#181d1f;letter-spacing:0.501px;">deliverShipment</span>
<span class="t" style="left:731.70px;top:831.19px;font-size:14.9px;color:#181d1f;">6</span>
<span class="t" style="left:1188.60px;top:831.19px;font-size:14.9px;color:#181d1f;letter-spacing:0.667px;">end</span>
<span class="t" style="left:1595.80px;top:892.19px;font-size:14.9px;color:#181d1f;letter-spacing:-0.282px;">Page Size:</span>
<span class="t" style="left:1764.40px;top:892.19px;font-size:14.9px;color:#181d1f;letter-spacing:0.320px;"><i>1</i> to <i>7</i> of <i>7</i></span>
<span class="t" style="left:1930.70px;top:892.19px;font-size:14.9px;color:#181d1f;letter-spacing:0.038px;">Page <i>1</i> of <i>1</i></span>
<span class="t" style="left:713.50px;top:986.97px;font-size:17.4px;color:#141c2e;letter-spacing:0.171px;">Route Map</span>
<span class="t" style="left:819.18px;top:987.56px;font-size:15.4px;color:#ffffff;letter-spacing:0.047px;">View trip</span>
</body></html>
